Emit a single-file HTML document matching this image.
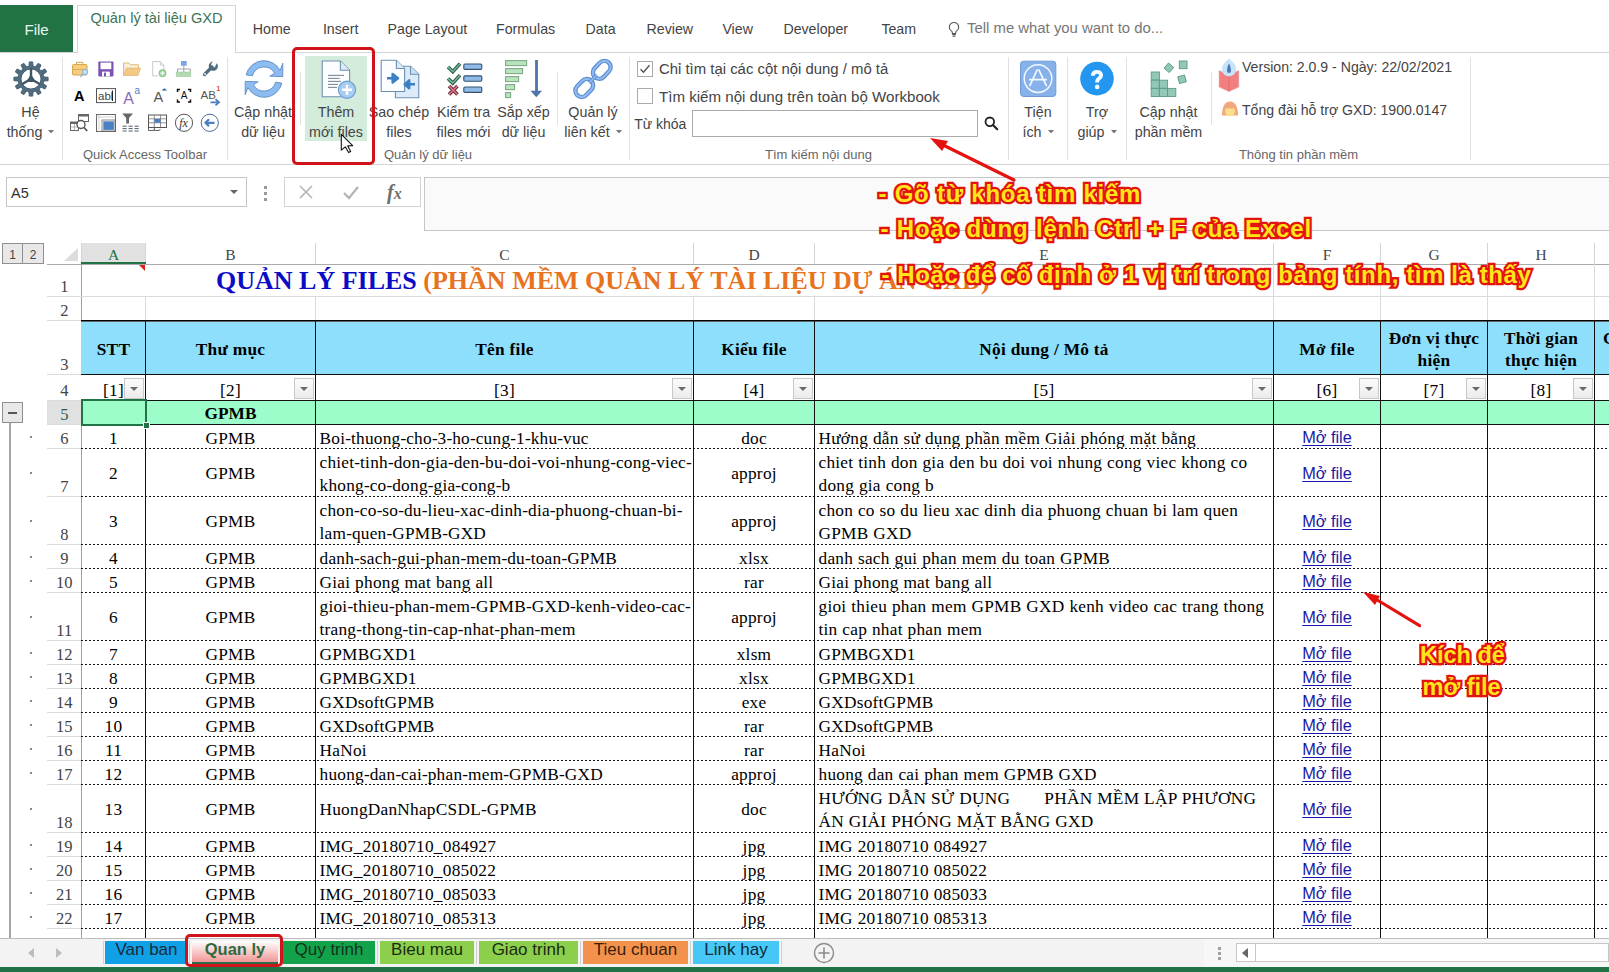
<!DOCTYPE html><html><head><meta charset="utf-8"><title>Excel</title><style>
*{margin:0;padding:0}
html,body{width:1609px;height:972px;overflow:hidden;background:#fff;position:relative}
.a{position:absolute}
.t{white-space:pre;font-family:"Liberation Sans",sans-serif}
.dd{font-size:9px;color:#666;vertical-align:2px}
svg.a{overflow:visible}
</style></head><body><div class="a" style="left:0px;top:5px;width:73px;height:47px;background:#217346"></div>
<div class="a t" style="top:21.80px;font-size:15px;line-height:15px;color:#e9f7ee;font-family:'Liberation Sans', sans-serif;left:24.50px;">File</div>
<div class="a" style="left:0px;top:52px;width:1609px;height:1px;background:#d5d5d5"></div>
<div class="a" style="left:77px;top:5px;width:159px;height:48px;background:#fff;border:1px solid #d5d5d5;border-bottom:none;box-sizing:border-box"></div>
<div class="a t" style="top:11.34px;font-size:14.6px;line-height:14.6px;color:#3a7456;font-family:'Liberation Sans', sans-serif;left:90.40px;">Quản lý tài liệu GXD</div>
<div class="a t" style="top:21.58px;font-size:14.2px;line-height:14.2px;color:#444;font-family:'Liberation Sans', sans-serif;left:252.80px;">Home</div>
<div class="a t" style="top:21.58px;font-size:14.2px;line-height:14.2px;color:#444;font-family:'Liberation Sans', sans-serif;left:322.90px;">Insert</div>
<div class="a t" style="top:21.58px;font-size:14.2px;line-height:14.2px;color:#444;font-family:'Liberation Sans', sans-serif;left:387.60px;">Page Layout</div>
<div class="a t" style="top:21.58px;font-size:14.2px;line-height:14.2px;color:#444;font-family:'Liberation Sans', sans-serif;left:496.00px;">Formulas</div>
<div class="a t" style="top:21.58px;font-size:14.2px;line-height:14.2px;color:#444;font-family:'Liberation Sans', sans-serif;left:585.60px;">Data</div>
<div class="a t" style="top:21.58px;font-size:14.2px;line-height:14.2px;color:#444;font-family:'Liberation Sans', sans-serif;left:646.60px;">Review</div>
<div class="a t" style="top:21.58px;font-size:14.2px;line-height:14.2px;color:#444;font-family:'Liberation Sans', sans-serif;left:722.40px;">View</div>
<div class="a t" style="top:21.58px;font-size:14.2px;line-height:14.2px;color:#444;font-family:'Liberation Sans', sans-serif;left:783.40px;">Developer</div>
<div class="a t" style="top:21.58px;font-size:14.2px;line-height:14.2px;color:#444;font-family:'Liberation Sans', sans-serif;left:881.40px;">Team</div>
<svg class="a" style="left:948px;top:21px;" width="12" height="17" viewBox="0 0 12 17"><path d="M6 1.5a4.6 4.6 0 0 0-2.6 8.4c.6.5.9 1 .9 1.7v.9h3.4v-.9c0-.7.3-1.2.9-1.7A4.6 4.6 0 0 0 6 1.5z" fill="none" stroke="#555" stroke-width="1.1"/><path d="M4.3 13.6h3.4M4.6 15.2h2.8" stroke="#555" stroke-width="1.1"/></svg>
<div class="a t" style="top:20.99px;font-size:14.9px;line-height:14.9px;color:#777;font-family:'Liberation Sans', sans-serif;left:967.00px;">Tell me what you want to do...</div>
<div class="a" style="left:0px;top:164px;width:1609px;height:1px;background:#d5d5d5"></div>
<div class="a" style="left:62px;top:57px;width:1px;height:103px;background:#e1e1e1"></div>
<div class="a" style="left:227px;top:57px;width:1px;height:103px;background:#e1e1e1"></div>
<div class="a" style="left:629px;top:57px;width:1px;height:103px;background:#e1e1e1"></div>
<div class="a" style="left:1008px;top:57px;width:1px;height:103px;background:#e1e1e1"></div>
<div class="a" style="left:1067px;top:57px;width:1px;height:103px;background:#e1e1e1"></div>
<div class="a" style="left:1126px;top:57px;width:1px;height:103px;background:#e1e1e1"></div>
<div class="a" style="left:1470px;top:57px;width:1px;height:103px;background:#e1e1e1"></div>
<div class="a" style="left:300px;top:72px;width:1px;height:53px;background:#e1e1e1"></div>
<div class="a" style="left:557px;top:72px;width:1px;height:53px;background:#e1e1e1"></div>
<div class="a" style="left:1211px;top:72px;width:1px;height:53px;background:#e1e1e1"></div>
<div class="a t" style="top:148.00px;font-size:13px;line-height:13px;color:#666;font-family:'Liberation Sans', sans-serif;left:-155.00px;width:600px;text-align:center;">Quick Access Toolbar</div>
<div class="a t" style="top:148.00px;font-size:13px;line-height:13px;color:#666;font-family:'Liberation Sans', sans-serif;left:128.00px;width:600px;text-align:center;">Quản lý dữ liệu</div>
<div class="a t" style="top:148.00px;font-size:13px;line-height:13px;color:#666;font-family:'Liberation Sans', sans-serif;left:518.50px;width:600px;text-align:center;">Tìm kiếm nội dung</div>
<div class="a t" style="top:148.00px;font-size:13px;line-height:13px;color:#666;font-family:'Liberation Sans', sans-serif;left:998.50px;width:600px;text-align:center;">Thông tin phần mềm</div>
<div class="a t" style="top:104.90px;font-size:14.3px;line-height:14.3px;color:#444;font-family:'Liberation Sans', sans-serif;left:-29.50px;width:120px;text-align:center;">Hệ</div>
<div class="a t" style="top:124.90px;font-size:14.3px;line-height:14.3px;color:#444;font-family:'Liberation Sans', sans-serif;left:-29.50px;width:120px;text-align:center;">thống <svg width="6" height="3.5" style="vertical-align:3.5px;margin-left:2px"><path d="M0 0h6l-3 3.5z" fill="#777"/></svg></div>
<div class="a t" style="top:104.90px;font-size:14.3px;line-height:14.3px;color:#444;font-family:'Liberation Sans', sans-serif;left:203.00px;width:120px;text-align:center;">Cập nhật</div>
<div class="a t" style="top:124.90px;font-size:14.3px;line-height:14.3px;color:#444;font-family:'Liberation Sans', sans-serif;left:203.00px;width:120px;text-align:center;">dữ liệu</div>
<div class="a" style="left:305px;top:56px;width:62px;height:85px;background:#d3ecdc"></div>
<div class="a t" style="top:104.90px;font-size:14.3px;line-height:14.3px;color:#444;font-family:'Liberation Sans', sans-serif;left:276.00px;width:120px;text-align:center;">Thêm</div>
<div class="a t" style="top:124.90px;font-size:14.3px;line-height:14.3px;color:#444;font-family:'Liberation Sans', sans-serif;left:276.00px;width:120px;text-align:center;">mới files</div>
<div class="a t" style="top:104.90px;font-size:14.3px;line-height:14.3px;color:#444;font-family:'Liberation Sans', sans-serif;left:339.00px;width:120px;text-align:center;">Sao chép</div>
<div class="a t" style="top:124.90px;font-size:14.3px;line-height:14.3px;color:#444;font-family:'Liberation Sans', sans-serif;left:339.00px;width:120px;text-align:center;">files</div>
<div class="a t" style="top:104.90px;font-size:14.3px;line-height:14.3px;color:#444;font-family:'Liberation Sans', sans-serif;left:403.50px;width:120px;text-align:center;">Kiểm tra</div>
<div class="a t" style="top:124.90px;font-size:14.3px;line-height:14.3px;color:#444;font-family:'Liberation Sans', sans-serif;left:403.50px;width:120px;text-align:center;">files mới</div>
<div class="a t" style="top:104.90px;font-size:14.3px;line-height:14.3px;color:#444;font-family:'Liberation Sans', sans-serif;left:463.50px;width:120px;text-align:center;">Sắp xếp</div>
<div class="a t" style="top:124.90px;font-size:14.3px;line-height:14.3px;color:#444;font-family:'Liberation Sans', sans-serif;left:463.50px;width:120px;text-align:center;">dữ liệu</div>
<div class="a t" style="top:104.90px;font-size:14.3px;line-height:14.3px;color:#444;font-family:'Liberation Sans', sans-serif;left:533.00px;width:120px;text-align:center;">Quản lý</div>
<div class="a t" style="top:124.90px;font-size:14.3px;line-height:14.3px;color:#444;font-family:'Liberation Sans', sans-serif;left:533.00px;width:120px;text-align:center;">liên kết <svg width="6" height="3.5" style="vertical-align:3.5px;margin-left:2px"><path d="M0 0h6l-3 3.5z" fill="#777"/></svg></div>
<div class="a t" style="top:104.90px;font-size:14.3px;line-height:14.3px;color:#444;font-family:'Liberation Sans', sans-serif;left:978.00px;width:120px;text-align:center;">Tiện</div>
<div class="a t" style="top:124.90px;font-size:14.3px;line-height:14.3px;color:#444;font-family:'Liberation Sans', sans-serif;left:978.00px;width:120px;text-align:center;">ích <svg width="6" height="3.5" style="vertical-align:3.5px;margin-left:2px"><path d="M0 0h6l-3 3.5z" fill="#777"/></svg></div>
<div class="a t" style="top:104.90px;font-size:14.3px;line-height:14.3px;color:#444;font-family:'Liberation Sans', sans-serif;left:1037.00px;width:120px;text-align:center;">Trợ</div>
<div class="a t" style="top:124.90px;font-size:14.3px;line-height:14.3px;color:#444;font-family:'Liberation Sans', sans-serif;left:1037.00px;width:120px;text-align:center;">giúp <svg width="6" height="3.5" style="vertical-align:3.5px;margin-left:2px"><path d="M0 0h6l-3 3.5z" fill="#777"/></svg></div>
<div class="a t" style="top:104.90px;font-size:14.3px;line-height:14.3px;color:#444;font-family:'Liberation Sans', sans-serif;left:1108.50px;width:120px;text-align:center;">Cập nhật</div>
<div class="a t" style="top:124.90px;font-size:14.3px;line-height:14.3px;color:#444;font-family:'Liberation Sans', sans-serif;left:1108.50px;width:120px;text-align:center;">phần mềm</div>
<div class="a" style="left:637px;top:61px;width:16px;height:16px;border:1px solid #ababab;box-sizing:border-box;background:#fff"></div>
<svg class="a" style="left:637px;top:61px;" width="16" height="16" viewBox="0 0 16 16"><path d="M3.5 8.2l3 3 6-7" fill="none" stroke="#555" stroke-width="1.4"/></svg>
<div class="a t" style="top:61.89px;font-size:14.9px;line-height:14.9px;color:#444;font-family:'Liberation Sans', sans-serif;left:659.00px;">Chỉ tìm tại các cột nội dung / mô tả</div>
<div class="a" style="left:637px;top:88px;width:16px;height:16px;border:1px solid #ababab;box-sizing:border-box;background:#fff"></div>
<div class="a t" style="top:88.72px;font-size:15.1px;line-height:15.1px;color:#444;font-family:'Liberation Sans', sans-serif;left:659.00px;">Tìm kiếm nội dung trên toàn bộ Workbook</div>
<div class="a t" style="top:117.15px;font-size:14px;line-height:14px;color:#444;font-family:'Liberation Sans', sans-serif;left:634.20px;">Từ khóa</div>
<div class="a" style="left:692px;top:110px;width:286px;height:27px;border:1px solid #ababab;box-sizing:border-box;background:#fff"></div>
<svg class="a" style="left:984px;top:116px;" width="15" height="15" viewBox="0 0 15 15"><circle cx="5.8" cy="5.8" r="4.3" fill="none" stroke="#222" stroke-width="1.8"/><path d="M9 9l4.2 4.2" stroke="#222" stroke-width="2.2" stroke-linecap="round"/></svg>
<div class="a t" style="top:60.06px;font-size:14.1px;line-height:14.1px;color:#444;font-family:'Liberation Sans', sans-serif;left:1242.00px;">Version: 2.0.9 - Ngày: 22/02/2021</div>
<div class="a t" style="top:103.06px;font-size:14.1px;line-height:14.1px;color:#444;font-family:'Liberation Sans', sans-serif;left:1242.00px;">Tổng đài hỗ trợ GXD: 1900.0147</div>
<svg class="a" style="left:0px;top:0px;" width="1609" height="200" viewBox="0 0 1609 200"><path d="M28.93 66.17 L29.28 61.89 L32.72 61.89 L33.07 66.17 L35.62 66.85 L38.07 63.32 L41.04 65.04 L39.21 68.92 L41.08 70.79 L44.96 68.96 L46.68 71.93 L43.15 74.38 L43.83 76.93 L48.11 77.28 L48.11 80.72 L43.83 81.07 L43.15 83.62 L46.68 86.07 L44.96 89.04 L41.08 87.21 L39.21 89.08 L41.04 92.96 L38.07 94.68 L35.62 91.15 L33.07 91.83 L32.72 96.11 L29.28 96.11 L28.93 91.83 L26.38 91.15 L23.93 94.68 L20.96 92.96 L22.79 89.08 L20.92 87.21 L17.04 89.04 L15.32 86.07 L18.85 83.62 L18.17 81.07 L13.89 80.72 L13.89 77.28 L18.17 76.93 L18.85 74.38 L15.32 71.93 L17.04 68.96 L20.92 70.79 L22.79 68.92 L20.96 65.04 L23.93 63.32 L26.38 66.85Z M41.0 79 A10.0 10.0 0 1 0 21.0 79 A10.0 10.0 0 1 0 41.0 79Z" fill="#4f6c80" fill-rule="evenodd" stroke="#425b6c" stroke-width="0.9" stroke-linejoin="round"/><path d="M31 79 L31.00 68.40" stroke="#3f5666" stroke-width="2.4"/><path d="M31 79 L40.18 84.30" stroke="#3f5666" stroke-width="2.4"/><path d="M31 79 L21.82 84.30" stroke="#3f5666" stroke-width="2.4"/><path d="M31 75.4 L34.6 81.4 L27.4 81.4Z" fill="#3f5666" stroke="#3f5666" stroke-width="1.4" stroke-linejoin="round"/></svg>
<svg class="a" style="left:0px;top:0px;" width="1609" height="200" viewBox="0 0 1609 200"><rect x="72.5" y="64.5" width="14.5" height="10.5" rx="1" fill="#f6cc7e" stroke="#d9a54e" stroke-width="1"/><path d="M76.5 64.5v-2.2h6.5v2.2" fill="none" stroke="#d9a54e" stroke-width="1"/><path d="M72.5 69.5h14.5" stroke="#d9a54e" stroke-width="0.8"/><circle cx="85" cy="72" r="2.6" fill="#c7e2f8" stroke="#86b3de" stroke-width="1"/><path d="M83.2 74l-2.8 2.8" stroke="#86b3de" stroke-width="1.3"/><rect x="98.3" y="61.4" width="15.2" height="15" rx="0.8" fill="#7c52b3"/><rect x="100.5" y="62.6" width="10.8" height="6.6" fill="#fff"/><rect x="102" y="71.6" width="7.8" height="4.8" fill="#fff"/><rect x="104" y="72.6" width="2" height="3.8" fill="#7c52b3"/><path d="M123.6 75.5V63h5.2l1.6 1.8h8v3" fill="#fbf0dc" stroke="#e0b877" stroke-width="1"/><path d="M123.6 75.5l2.8-7.4h14.2l-2.6 7.4z" fill="#f3c985" stroke="#e0b877" stroke-width="0.8"/><path d="M152.7 61.6h7.6l3.6 3.6v5.5M158 75.9h-5.3V61.6" fill="#fff" stroke="#c9c9c9" stroke-width="1"/><path d="M160.3 61.6v3.6h3.6" fill="none" stroke="#c9c9c9" stroke-width="0.9"/><circle cx="162.5" cy="73.2" r="3.6" fill="#9ed49e" stroke="#7fbf7f" stroke-width="0.8"/><path d="M162.5 71.2v4M160.5 73.2h4" stroke="#fff" stroke-width="1.2"/><rect x="181" y="61" width="5.7" height="4.8" fill="#7aa6e6"/><path d="M183.8 65.8v3M177.5 72v-3h12.8v3M183.8 69v3" fill="none" stroke="#999" stroke-width="0.9"/><rect x="176.2" y="72" width="4.4" height="4.6" fill="#b5dcb5" stroke="#9cc99c" stroke-width="0.6"/><rect x="181.3" y="72" width="4.4" height="4.6" fill="#b5dcb5" stroke="#9cc99c" stroke-width="0.6"/><rect x="186.4" y="72" width="4.4" height="4.6" fill="#b5dcb5" stroke="#9cc99c" stroke-width="0.6"/><path d="M204.5 74.5l7.5-7.5" stroke="#4f6b80" stroke-width="3.2" stroke-linecap="round"/><path d="M216.8 63.2a4.6 4.6 0 1 1-3.8-1.6l-2 2.4 1.1 2.6 2.6 1z" fill="#4f6b80"/><circle cx="205" cy="74" r="0.9" fill="#fff"/><text x="79.3" y="101" font-family="Liberation Sans" font-weight="700" font-size="14.5" text-anchor="middle" fill="#000">A</text><rect x="96.5" y="88.6" width="19" height="14" fill="#fff" stroke="#555" stroke-width="1"/><text x="98" y="100" font-family="Liberation Sans" font-size="11.5" fill="#444">abl</text><path d="M112.4 90.5v10.5" stroke="#111" stroke-width="1"/><text x="128.7" y="103.5" font-family="Liberation Sans" font-size="16" text-anchor="middle" fill="#8a6bb5">A</text><text x="137.2" y="94.3" font-family="Liberation Sans" font-size="10" text-anchor="middle" fill="#4a7fc1">a</text><text x="158.3" y="101.7" font-family="Liberation Sans" font-size="14.5" text-anchor="middle" fill="#555">A</text><path d="M161.5 90.5l2.8-2.2 2.8 2.2z" fill="#3a5f8f"/><path d="M177.5 92v-2.5h2.5M188 89.5h2.5V92M190.5 99.5v2.5H188M180 102h-2.5v-2.5" fill="none" stroke="#111" stroke-width="1.5"/><text x="184" y="99.3" font-family="Liberation Sans" font-size="10" text-anchor="middle" fill="#111">A</text><text x="208.2" y="99" font-family="Liberation Sans" font-size="11.5" text-anchor="middle" fill="#555">AB</text><text x="218.3" y="91" font-family="Liberation Sans" font-weight="700" font-size="6.5" text-anchor="middle" fill="#d04a2a">1</text><path d="M210.5 102.3h7.5M215.5 99.2l3.5 3.1-3.5 3.1" fill="none" stroke="#4a7fc1" stroke-width="1.8"/><rect x="78.5" y="114.5" width="10" height="7" fill="#fff" stroke="#666" stroke-width="1"/><rect x="78.5" y="114.5" width="10" height="2" fill="#666"/><rect x="70.5" y="122" width="8" height="8.5" fill="#fff" stroke="#666" stroke-width="1"/><rect x="70.5" y="122" width="8" height="2" fill="#666"/><path d="M74.5 124v6.5M70.5 127h8" stroke="#888" stroke-width="0.6"/><circle cx="81" cy="124.5" r="4" fill="#fff" stroke="#555" stroke-width="1.4"/><path d="M84 127.5l3.2 3.5" stroke="#555" stroke-width="1.8"/><rect x="96.5" y="114.5" width="19" height="17" fill="#fff" stroke="#666" stroke-width="1"/><path d="M96.5 117h19M99 114.5v17" stroke="#c8c8c8" stroke-width="0.8"/><path d="M102.5 117.5h12.5M104 116.5v14" stroke="#ddd" stroke-width="0"/><rect x="102" y="120" width="13" height="11" fill="#fff" stroke="#666" stroke-width="0.8"/><rect x="103.3" y="121.3" width="10.6" height="8.6" fill="#4a80c4"/><path d="M122.2 113.5h10.8l-4 4.4v5.6h-2.8v-5.6z" fill="#666"/><path d="M122.5 126.2h4.2M128.5 126.2h4.2M134.5 126.2h4.2M122.5 128.6h4.2M128.5 128.6h4.2M134.5 128.6h4.2M122.5 131h4.2M128.5 131h4.2M134.5 131h4.2" stroke="#4f5f6e" stroke-width="1"/><rect x="148.5" y="115" width="18" height="12.5" fill="#fff" stroke="#555" stroke-width="1"/><path d="M148.5 118.8h18M148.5 122.8h18M154.3 115v12.5M160.5 115v12.5" stroke="#666" stroke-width="0.7"/><rect x="154.5" y="119" width="6" height="3.6" fill="#4a7fc1"/><path d="M148.5 127.5v3h5l1-1.5M154.3 127.5v3h5l1-1.5" fill="none" stroke="#555" stroke-width="0.9"/><circle cx="184" cy="122.8" r="8.6" fill="#fff" stroke="#555" stroke-width="1"/><text x="183.5" y="127" font-family="Liberation Serif" font-style="italic" font-size="12" text-anchor="middle" fill="#333">fx</text><circle cx="209.8" cy="122.8" r="8.6" fill="#fff" stroke="#4a6f9e" stroke-width="1"/><path d="M214.5 122.8h-8M209 119.3l-3.5 3.5 3.5 3.5" fill="none" stroke="#4a7fc1" stroke-width="2.2"/></svg>
<svg class="a" style="left:244px;top:59px;" width="40" height="40" viewBox="0 0 40 40"><path d="M2.17 15.88 A18.3 18.3 0 0 1 36.16 11.41 L38.8 4.2 L38.8 17.6 L25.8 17.2 L30.60 14.37 A12.0 12.0 0 0 0 8.46 16.69 Z" fill="#8dbcf0" stroke="#5e8bc4" stroke-width="0.9" stroke-linejoin="round"/><path d="M2.17 15.88 A18.3 18.3 0 0 1 36.16 11.41 L38.8 4.2 L38.8 17.6 L25.8 17.2 L30.60 14.37 A12.0 12.0 0 0 0 8.46 16.69 Z" fill="#8dbcf0" stroke="#5e8bc4" stroke-width="0.9" stroke-linejoin="round" transform="rotate(180 20 20)"/></svg>
<svg class="a" style="left:316px;top:56px;" width="46" height="46" viewBox="0 0 46 46"><path d="M6.2 5H24.4L33.6 14.2V40.7H6.2Z" fill="#fbfdff" stroke="#6f8fb0" stroke-width="1.1"/><path d="M24.4 5V14.2H33.6" fill="#dcebfa" stroke="#6f8fb0" stroke-width="1.1"/><path d="M12 19.4h16" stroke="#7f8c99" stroke-width="1.1"/><path d="M12 22.4h11.6" stroke="#7f8c99" stroke-width="1.1"/><path d="M12 25.4h13" stroke="#7f8c99" stroke-width="1.1"/><path d="M12 28.4h10" stroke="#7f8c99" stroke-width="1.1"/><path d="M12 31.4h9" stroke="#7f8c99" stroke-width="1.1"/><circle cx="31" cy="33.8" r="8.6" fill="#a8cdf3" stroke="#6b9dd1" stroke-width="1.2"/><path d="M31 28.8v10M26 33.8h10" stroke="#fff" stroke-width="2.4"/></svg>
<svg class="a" style="left:376px;top:56px;" width="48" height="46" viewBox="0 0 48 46"><path d="M19.4 10.2H34.5L42.8 18.3V41.7H19.4Z" fill="#dcebfa" stroke="#6f8fb0" stroke-width="1.1"/><path d="M34.5 10.2V18.3H42.8" fill="#c9e0f7" stroke="#6f8fb0" stroke-width="1.1"/><path d="M5.2 4.3H20.4L28.6 12.5V35.5H5.2Z" fill="#fbfdff" stroke="#6f8fb0" stroke-width="1.1"/><path d="M20.4 4.3V12.5H28.6" fill="#dcebfa" stroke="#6f8fb0" stroke-width="1.1"/><path d="M11 22.3h7M16.6 18l5.4 4.3-5.4 4.3z" fill="#3c7fc4" stroke="#3c7fc4" stroke-width="2.4" stroke-linejoin="round"/><path d="M39 28.3h-7M33.2 24.3l-4.6 4-0 0 4.6 4z" fill="#3c7fc4" stroke="#3c7fc4" stroke-width="2.4" stroke-linejoin="round"/></svg>
<svg class="a" style="left:442px;top:56px;" width="48" height="46" viewBox="0 0 48 46"><path d="M6 11l4.8 4.6 7.2-8" fill="none" stroke="#2f5d46" stroke-width="3.6" stroke-linejoin="miter"/><path d="M6 11l4.8 4.6 7.2-8" fill="none" stroke="#74c4a0" stroke-width="1.4" stroke-linejoin="miter"/><path d="M6 22.5l4.8 4.6 7.2-8" fill="none" stroke="#2f5d46" stroke-width="3.6" stroke-linejoin="miter"/><path d="M6 22.5l4.8 4.6 7.2-8" fill="none" stroke="#74c4a0" stroke-width="1.4" stroke-linejoin="miter"/><path d="M7 30l8.5 8.5M15.5 30L7 38.5" stroke="#6b2f3d" stroke-width="3.6"/><path d="M7 30l8.5 8.5M15.5 30L7 38.5" stroke="#e8798a" stroke-width="1.4"/><rect x="21.8" y="8" width="18" height="5.4" rx="1.2" fill="#8fbbe9" stroke="#34506e" stroke-width="1.1"/><rect x="21.8" y="19.9" width="18" height="5.4" rx="1.2" fill="#8fbbe9" stroke="#34506e" stroke-width="1.1"/><rect x="21.8" y="31" width="18" height="5.4" rx="1.2" fill="#8fbbe9" stroke="#34506e" stroke-width="1.1"/></svg>
<svg class="a" style="left:500px;top:56px;" width="48" height="46" viewBox="0 0 48 46"><rect x="5.6" y="4.6" width="21" height="5" fill="#b7e4bd" stroke="#7fa987" stroke-width="1.1"/><rect x="5.6" y="12.6" width="17" height="5" fill="#b7e4bd" stroke="#7fa987" stroke-width="1.1"/><rect x="5.6" y="20.6" width="13" height="5" fill="#b7e4bd" stroke="#7fa987" stroke-width="1.1"/><rect x="5.6" y="28.6" width="9" height="5" fill="#b7e4bd" stroke="#7fa987" stroke-width="1.1"/><rect x="5.6" y="36.6" width="5" height="5" fill="#b7e4bd" stroke="#7fa987" stroke-width="1.1"/><path d="M36.5 4v31" stroke="#4f74a8" stroke-width="2.8"/><path d="M30.5 34.8h11.6l-5.8 6.4z" fill="#4f74a8"/></svg>
<svg class="a" style="left:568px;top:56px;" width="48" height="46" viewBox="0 0 48 46"><g transform="translate(25 22.9) rotate(-46)"><rect x="2.6" y="-6.3" width="20" height="12.6" rx="6.3" fill="none" stroke="#5d8fd4" stroke-width="4.4"/><rect x="2.6" y="-6.3" width="20" height="12.6" rx="6.3" fill="none" stroke="#93bbef" stroke-width="2"/><rect x="-22.6" y="-6.3" width="20" height="12.6" rx="6.3" fill="none" stroke="#5d8fd4" stroke-width="4.4"/><rect x="-22.6" y="-6.3" width="20" height="12.6" rx="6.3" fill="none" stroke="#93bbef" stroke-width="2"/><path d="M-5.5 0h11" stroke="#5d8fd4" stroke-width="3.6"/><path d="M-5.5 0h11" stroke="#93bbef" stroke-width="1.5"/></g></svg>
<svg class="a" style="left:1016px;top:56px;" width="44" height="44" viewBox="0 0 44 44"><rect x="4.5" y="5.2" width="35.3" height="35.3" rx="3" fill="#86b1ea" stroke="#719bd6" stroke-width="1"/><circle cx="22" cy="22.6" r="13.8" fill="none" stroke="#f2f8ff" stroke-width="1.5"/><path d="M21.4 13.3L13.6 30.2M22.6 13.3L30.6 30.2M13 23.6h18" stroke="#f2f8ff" stroke-width="1.7"/></svg>
<svg class="a" style="left:1080px;top:62px;" width="34" height="34" viewBox="0 0 34 34"><circle cx="17" cy="16.6" r="16.8" fill="#2396ef"/><path d="M12.9 13.8C12.9 11.1 14.7 9.9 17 9.9C19.3 9.9 21.1 11.3 21.1 13.4C21.1 15.9 17.2 16.6 17.2 19.3V20.6" fill="none" stroke="#f4fbff" stroke-width="3.9"/><circle cx="17.2" cy="24.9" r="2.3" fill="#f4fbff"/></svg>
<svg class="a" style="left:1146px;top:56px;" width="46" height="46" viewBox="0 0 46 46"><rect x="5.2" y="16" width="8.2" height="8.1" fill="#93c7b7" stroke="#5b9b89" stroke-width="0.9"/><rect x="5.2" y="24.2" width="8.2" height="8.1" fill="#93c7b7" stroke="#5b9b89" stroke-width="0.9"/><rect x="13.4" y="24.2" width="8.2" height="8.1" fill="#93c7b7" stroke="#5b9b89" stroke-width="0.9"/><rect x="5.2" y="32.4" width="8.2" height="8.1" fill="#93c7b7" stroke="#5b9b89" stroke-width="0.9"/><rect x="13.4" y="32.4" width="8.2" height="8.1" fill="#93c7b7" stroke="#5b9b89" stroke-width="0.9"/><rect x="21.6" y="32.4" width="8.2" height="8.1" fill="#93c7b7" stroke="#5b9b89" stroke-width="0.9"/><rect x="-3.4" y="-3.4" width="6.8" height="6.8" fill="#93c7b7" stroke="#5b9b89" stroke-width="0.9" transform="translate(22.9 11.8) rotate(40)"/><rect x="33.3" y="5" width="7.7" height="7.7" fill="#93c7b7" stroke="#5b9b89" stroke-width="0.9"/><rect x="-3.5" y="-3.5" width="7" height="7" fill="#93c7b7" stroke="#5b9b89" stroke-width="0.9" transform="translate(36 23.3) rotate(-15)"/></svg>
<svg class="a" style="left:1212px;top:54px;" width="34" height="70" viewBox="0 0 34 70"><path d="M7.1 16.5L17 21L26.8 16.5V33L17 37.5L7.1 33Z" fill="#f27f80" stroke="#e8a0a0" stroke-width="0.6"/><path d="M17 21V37.5" stroke="#e26464" stroke-width="0.8"/><path d="M17 4.6C20.8 7.6 24.2 11.5 24.2 15.2A7.2 7.2 0 0 1 9.8 15.2C9.8 11.5 13.2 7.6 17 4.6Z" fill="#c7e3f9"/><path d="M17 9.5C18.3 12 19 14.5 19 16.5A2 2.6 0 0 1 15 16.5C15 14.5 15.7 12 17 9.5Z" fill="#4d78b8"/></svg>
<svg class="a" style="left:1212px;top:54px;" width="34" height="70" viewBox="0 0 34 70"><path d="M10 61.5c0-8 2.5-14 8-14s8 6 8 14z" fill="#f2a77c"/><ellipse cx="18" cy="57" rx="5" ry="5.2" fill="#fae08a"/><path d="M12.5 54.5c2-4 9-4 11 0" fill="#f2a77c"/></svg>
<svg class="a" style="left:0px;top:0px;" width="1609" height="200" viewBox="0 0 1609 200"><path d="M341.3 134.4V150.2L345.3 146.8L348.6 152.6L350.7 151.5L347.7 145.9L352.7 145.7Z" fill="#fff" stroke="#111" stroke-width="1.1" stroke-linejoin="round"/></svg>
<div class="a" style="left:292px;top:47px;width:83px;height:118px;border:3px solid #d0121b;border-radius:5px;box-sizing:border-box"></div>
<div class="a" style="left:6px;top:177px;width:241px;height:30px;border:1px solid #c6c6c6;box-sizing:border-box;background:#fff"></div>
<div class="a t" style="top:185.73px;font-size:14.5px;line-height:14.5px;color:#333;font-family:'Liberation Sans', sans-serif;left:11.00px;">A5</div>
<svg class="a" style="left:230px;top:190px;" width="8" height="4" viewBox="0 0 8 4"><path d="M0 0h8l-4 4z" fill="#666"/></svg>
<div class="a" style="left:264px;top:186px;width:3px;height:3px;background:#999"></div>
<div class="a" style="left:264px;top:192px;width:3px;height:3px;background:#999"></div>
<div class="a" style="left:264px;top:198px;width:3px;height:3px;background:#999"></div>
<div class="a" style="left:284px;top:177px;width:137px;height:30px;border:1px solid #d2d2d2;box-sizing:border-box;background:#fff"></div>
<svg class="a" style="left:299px;top:185px;" width="14" height="14" viewBox="0 0 14 14"><path d="M1 1l12 12M13 1L1 13" stroke="#b4b4b4" stroke-width="1.6"/></svg>
<svg class="a" style="left:343px;top:185px;" width="16" height="15" viewBox="0 0 16 15"><path d="M1 8l5 5L15 2" fill="none" stroke="#b4b4b4" stroke-width="2.2"/></svg>
<div class="a t" style="top:181.75px;font-size:20px;line-height:20px;color:#6e6e6e;font-family:'Liberation Serif', serif;font-weight:700;left:387.00px;"><i>f</i><i style="font-size:16px">x</i></div>
<div class="a" style="left:424px;top:177px;width:1200px;height:54px;border:1px solid #c6c6c6;box-sizing:border-box;background:#fafafa"></div>
<div class="a" style="left:47px;top:243px;width:1562px;height:21px;background:#fff"></div>
<div class="a" style="left:81px;top:243px;width:65px;height:21px;background:#e1e1e1"></div>
<div class="a t" style="top:246.52px;font-size:15.5px;line-height:15.5px;color:#217346;font-family:'Liberation Serif', serif;left:83.50px;width:60px;text-align:center;">A</div>
<div class="a t" style="top:246.52px;font-size:15.5px;line-height:15.5px;color:#444;font-family:'Liberation Serif', serif;left:200.50px;width:60px;text-align:center;">B</div>
<div class="a t" style="top:246.52px;font-size:15.5px;line-height:15.5px;color:#444;font-family:'Liberation Serif', serif;left:474.50px;width:60px;text-align:center;">C</div>
<div class="a t" style="top:246.52px;font-size:15.5px;line-height:15.5px;color:#444;font-family:'Liberation Serif', serif;left:724.00px;width:60px;text-align:center;">D</div>
<div class="a t" style="top:246.52px;font-size:15.5px;line-height:15.5px;color:#444;font-family:'Liberation Serif', serif;left:1014.00px;width:60px;text-align:center;">E</div>
<div class="a t" style="top:246.52px;font-size:15.5px;line-height:15.5px;color:#444;font-family:'Liberation Serif', serif;left:1297.00px;width:60px;text-align:center;">F</div>
<div class="a t" style="top:246.52px;font-size:15.5px;line-height:15.5px;color:#444;font-family:'Liberation Serif', serif;left:1404.00px;width:60px;text-align:center;">G</div>
<div class="a t" style="top:246.52px;font-size:15.5px;line-height:15.5px;color:#444;font-family:'Liberation Serif', serif;left:1511.00px;width:60px;text-align:center;">H</div>
<div class="a t" style="top:246.52px;font-size:15.5px;line-height:15.5px;color:#444;font-family:'Liberation Serif', serif;left:1618.00px;width:60px;text-align:center;">I</div>
<div class="a" style="left:81px;top:243px;width:1px;height:21px;background:#d5d5d5"></div>
<div class="a" style="left:145px;top:243px;width:1px;height:21px;background:#d5d5d5"></div>
<div class="a" style="left:315px;top:243px;width:1px;height:21px;background:#d5d5d5"></div>
<div class="a" style="left:693px;top:243px;width:1px;height:21px;background:#d5d5d5"></div>
<div class="a" style="left:814px;top:243px;width:1px;height:21px;background:#d5d5d5"></div>
<div class="a" style="left:1273px;top:243px;width:1px;height:21px;background:#d5d5d5"></div>
<div class="a" style="left:1380px;top:243px;width:1px;height:21px;background:#d5d5d5"></div>
<div class="a" style="left:1487px;top:243px;width:1px;height:21px;background:#d5d5d5"></div>
<div class="a" style="left:1594px;top:243px;width:1px;height:21px;background:#d5d5d5"></div>
<div class="a" style="left:47px;top:264px;width:1562px;height:1px;background:#ababab"></div>
<div class="a" style="left:81px;top:262px;width:65px;height:2px;background:#217346"></div>
<svg class="a" style="left:139px;top:265px;" width="6" height="6" viewBox="0 0 6 6"><path d="M0 0h6v6z" fill="#e0201a"/></svg>
<svg class="a" style="left:64px;top:248px;" width="14" height="13" viewBox="0 0 14 13"><path d="M14 0v13H0z" fill="#dcdcdc"/></svg>
<div class="a" style="left:2px;top:243px;width:21px;height:21px;background:#e8e8e8;border:1px solid #8f8f8f;box-sizing:border-box"></div>
<div class="a" style="left:22px;top:243px;width:22px;height:21px;background:#e8e8e8;border:1px solid #8f8f8f;box-sizing:border-box"></div>
<div class="a t" style="top:248.84px;font-size:12px;line-height:12px;color:#444;font-family:'Liberation Sans', sans-serif;left:2.50px;width:20px;text-align:center;">1</div>
<div class="a t" style="top:248.84px;font-size:12px;line-height:12px;color:#444;font-family:'Liberation Sans', sans-serif;left:23.00px;width:20px;text-align:center;">2</div>
<div class="a" style="left:81px;top:264px;width:1px;height:674px;background:#9f9f9f"></div>
<div class="a" style="left:47px;top:400px;width:34px;height:24px;background:#e1e1e1"></div>
<div class="a" style="left:47px;top:296px;width:34px;height:1px;background:#dcdcdc"></div>
<div class="a t" style="top:278.68px;font-size:16.5px;line-height:16.5px;color:#444;font-family:'Liberation Serif', serif;left:47.25px;width:34px;text-align:center;">1</div>
<div class="a" style="left:47px;top:320px;width:34px;height:1px;background:#dcdcdc"></div>
<div class="a t" style="top:302.68px;font-size:16.5px;line-height:16.5px;color:#444;font-family:'Liberation Serif', serif;left:47.25px;width:34px;text-align:center;">2</div>
<div class="a" style="left:47px;top:374px;width:34px;height:1px;background:#dcdcdc"></div>
<div class="a t" style="top:356.68px;font-size:16.5px;line-height:16.5px;color:#444;font-family:'Liberation Serif', serif;left:47.25px;width:34px;text-align:center;">3</div>
<div class="a" style="left:47px;top:400px;width:34px;height:1px;background:#dcdcdc"></div>
<div class="a t" style="top:382.68px;font-size:16.5px;line-height:16.5px;color:#444;font-family:'Liberation Serif', serif;left:47.25px;width:34px;text-align:center;">4</div>
<div class="a" style="left:47px;top:424px;width:34px;height:1px;background:#dcdcdc"></div>
<div class="a t" style="top:406.68px;font-size:16.5px;line-height:16.5px;color:#2f5a45;font-family:'Liberation Serif', serif;left:47.25px;width:34px;text-align:center;">5</div>
<div class="a" style="left:47px;top:448px;width:34px;height:1px;background:#dcdcdc"></div>
<div class="a t" style="top:430.68px;font-size:16.5px;line-height:16.5px;color:#444;font-family:'Liberation Serif', serif;left:47.25px;width:34px;text-align:center;">6</div>
<div class="a" style="left:47px;top:496px;width:34px;height:1px;background:#dcdcdc"></div>
<div class="a t" style="top:478.68px;font-size:16.5px;line-height:16.5px;color:#444;font-family:'Liberation Serif', serif;left:47.25px;width:34px;text-align:center;">7</div>
<div class="a" style="left:47px;top:544px;width:34px;height:1px;background:#dcdcdc"></div>
<div class="a t" style="top:526.68px;font-size:16.5px;line-height:16.5px;color:#444;font-family:'Liberation Serif', serif;left:47.25px;width:34px;text-align:center;">8</div>
<div class="a" style="left:47px;top:568px;width:34px;height:1px;background:#dcdcdc"></div>
<div class="a t" style="top:550.68px;font-size:16.5px;line-height:16.5px;color:#444;font-family:'Liberation Serif', serif;left:47.25px;width:34px;text-align:center;">9</div>
<div class="a" style="left:47px;top:592px;width:34px;height:1px;background:#dcdcdc"></div>
<div class="a t" style="top:574.68px;font-size:16.5px;line-height:16.5px;color:#444;font-family:'Liberation Serif', serif;left:47.25px;width:34px;text-align:center;">10</div>
<div class="a" style="left:47px;top:640px;width:34px;height:1px;background:#dcdcdc"></div>
<div class="a t" style="top:622.68px;font-size:16.5px;line-height:16.5px;color:#444;font-family:'Liberation Serif', serif;left:47.25px;width:34px;text-align:center;">11</div>
<div class="a" style="left:47px;top:664px;width:34px;height:1px;background:#dcdcdc"></div>
<div class="a t" style="top:646.68px;font-size:16.5px;line-height:16.5px;color:#444;font-family:'Liberation Serif', serif;left:47.25px;width:34px;text-align:center;">12</div>
<div class="a" style="left:47px;top:688px;width:34px;height:1px;background:#dcdcdc"></div>
<div class="a t" style="top:670.68px;font-size:16.5px;line-height:16.5px;color:#444;font-family:'Liberation Serif', serif;left:47.25px;width:34px;text-align:center;">13</div>
<div class="a" style="left:47px;top:712px;width:34px;height:1px;background:#dcdcdc"></div>
<div class="a t" style="top:694.68px;font-size:16.5px;line-height:16.5px;color:#444;font-family:'Liberation Serif', serif;left:47.25px;width:34px;text-align:center;">14</div>
<div class="a" style="left:47px;top:736px;width:34px;height:1px;background:#dcdcdc"></div>
<div class="a t" style="top:718.68px;font-size:16.5px;line-height:16.5px;color:#444;font-family:'Liberation Serif', serif;left:47.25px;width:34px;text-align:center;">15</div>
<div class="a" style="left:47px;top:760px;width:34px;height:1px;background:#dcdcdc"></div>
<div class="a t" style="top:742.68px;font-size:16.5px;line-height:16.5px;color:#444;font-family:'Liberation Serif', serif;left:47.25px;width:34px;text-align:center;">16</div>
<div class="a" style="left:47px;top:784px;width:34px;height:1px;background:#dcdcdc"></div>
<div class="a t" style="top:766.68px;font-size:16.5px;line-height:16.5px;color:#444;font-family:'Liberation Serif', serif;left:47.25px;width:34px;text-align:center;">17</div>
<div class="a" style="left:47px;top:832px;width:34px;height:1px;background:#dcdcdc"></div>
<div class="a t" style="top:814.68px;font-size:16.5px;line-height:16.5px;color:#444;font-family:'Liberation Serif', serif;left:47.25px;width:34px;text-align:center;">18</div>
<div class="a" style="left:47px;top:856px;width:34px;height:1px;background:#dcdcdc"></div>
<div class="a t" style="top:838.68px;font-size:16.5px;line-height:16.5px;color:#444;font-family:'Liberation Serif', serif;left:47.25px;width:34px;text-align:center;">19</div>
<div class="a" style="left:47px;top:880px;width:34px;height:1px;background:#dcdcdc"></div>
<div class="a t" style="top:862.68px;font-size:16.5px;line-height:16.5px;color:#444;font-family:'Liberation Serif', serif;left:47.25px;width:34px;text-align:center;">20</div>
<div class="a" style="left:47px;top:904px;width:34px;height:1px;background:#dcdcdc"></div>
<div class="a t" style="top:886.68px;font-size:16.5px;line-height:16.5px;color:#444;font-family:'Liberation Serif', serif;left:47.25px;width:34px;text-align:center;">21</div>
<div class="a" style="left:47px;top:928px;width:34px;height:1px;background:#dcdcdc"></div>
<div class="a t" style="top:910.68px;font-size:16.5px;line-height:16.5px;color:#444;font-family:'Liberation Serif', serif;left:47.25px;width:34px;text-align:center;">22</div>
<div class="a t" style="top:958.68px;font-size:16.5px;line-height:16.5px;color:#444;font-family:'Liberation Serif', serif;left:47.25px;width:34px;text-align:center;">23</div>
<div class="a" style="left:2px;top:402px;width:21px;height:21px;background:#e8e8e8;border:1px solid #8f8f8f;box-sizing:border-box"></div>
<div class="a" style="left:8px;top:412px;width:9px;height:2px;background:#555"></div>
<div class="a" style="left:9px;top:423px;width:2px;height:515px;background:#a6a6a6"></div>
<div class="a" style="left:30px;top:436px;width:2px;height:2px;background:#888"></div>
<div class="a" style="left:30px;top:472px;width:2px;height:2px;background:#888"></div>
<div class="a" style="left:30px;top:520px;width:2px;height:2px;background:#888"></div>
<div class="a" style="left:30px;top:556px;width:2px;height:2px;background:#888"></div>
<div class="a" style="left:30px;top:580px;width:2px;height:2px;background:#888"></div>
<div class="a" style="left:30px;top:616px;width:2px;height:2px;background:#888"></div>
<div class="a" style="left:30px;top:652px;width:2px;height:2px;background:#888"></div>
<div class="a" style="left:30px;top:676px;width:2px;height:2px;background:#888"></div>
<div class="a" style="left:30px;top:700px;width:2px;height:2px;background:#888"></div>
<div class="a" style="left:30px;top:724px;width:2px;height:2px;background:#888"></div>
<div class="a" style="left:30px;top:748px;width:2px;height:2px;background:#888"></div>
<div class="a" style="left:30px;top:772px;width:2px;height:2px;background:#888"></div>
<div class="a" style="left:30px;top:808px;width:2px;height:2px;background:#888"></div>
<div class="a" style="left:30px;top:844px;width:2px;height:2px;background:#888"></div>
<div class="a" style="left:30px;top:868px;width:2px;height:2px;background:#888"></div>
<div class="a" style="left:30px;top:892px;width:2px;height:2px;background:#888"></div>
<div class="a" style="left:30px;top:916px;width:2px;height:2px;background:#888"></div>
<div class="a" style="left:81px;top:296px;width:1528px;height:1px;background:#dadada"></div>
<div class="a" style="left:145px;top:296px;width:1px;height:24px;background:#dadada"></div>
<div class="a" style="left:315px;top:296px;width:1px;height:24px;background:#dadada"></div>
<div class="a" style="left:693px;top:296px;width:1px;height:24px;background:#dadada"></div>
<div class="a" style="left:814px;top:296px;width:1px;height:24px;background:#dadada"></div>
<div class="a" style="left:1273px;top:296px;width:1px;height:24px;background:#dadada"></div>
<div class="a" style="left:1273px;top:264px;width:1px;height:32px;background:#dadada"></div>
<div class="a" style="left:1380px;top:296px;width:1px;height:24px;background:#dadada"></div>
<div class="a" style="left:1380px;top:264px;width:1px;height:32px;background:#dadada"></div>
<div class="a" style="left:1487px;top:296px;width:1px;height:24px;background:#dadada"></div>
<div class="a" style="left:1487px;top:264px;width:1px;height:32px;background:#dadada"></div>
<div class="a" style="left:1594px;top:296px;width:1px;height:24px;background:#dadada"></div>
<div class="a" style="left:1594px;top:264px;width:1px;height:32px;background:#dadada"></div>
<div class="a t" style="top:267.73px;font-size:26px;line-height:26px;color:#0c0cc6;font-family:'Liberation Serif', serif;font-weight:700;left:216.00px;">QUẢN LÝ FILES <span style="color:#e8731f">(PHẦN MỀM QUẢN LÝ TÀI LIỆU DỰ ÁN GXD)</span></div>
<div class="a" style="left:81px;top:320px;width:1528px;height:54px;background:#8edffb"></div>
<div class="a" style="left:81px;top:374px;width:1528px;height:26px;background:#fff"></div>
<div class="a" style="left:81px;top:400px;width:1528px;height:24px;background:#9dfdca"></div>
<div class="a" style="left:81px;top:320px;width:1528px;height:1px;background:#000"></div>
<div class="a" style="left:81px;top:321px;width:1528px;height:1px;background:#666"></div>
<div class="a" style="left:81px;top:374px;width:1528px;height:1px;background:#111"></div>
<div class="a" style="left:81px;top:400px;width:1528px;height:1px;background:#111"></div>
<div class="a" style="left:81px;top:424px;width:1528px;height:1px;background:#111"></div>
<div class="a t" style="top:340.51px;font-size:17.3px;line-height:17.3px;color:#000;font-family:'Liberation Serif', serif;font-weight:700;left:-36.50px;width:300px;text-align:center;letter-spacing:0.3px;">STT</div>
<div class="a t" style="top:340.51px;font-size:17.3px;line-height:17.3px;color:#000;font-family:'Liberation Serif', serif;font-weight:700;left:80.50px;width:300px;text-align:center;letter-spacing:0.3px;">Thư mục</div>
<div class="a t" style="top:340.51px;font-size:17.3px;line-height:17.3px;color:#000;font-family:'Liberation Serif', serif;font-weight:700;left:354.50px;width:300px;text-align:center;letter-spacing:0.3px;">Tên file</div>
<div class="a t" style="top:340.51px;font-size:17.3px;line-height:17.3px;color:#000;font-family:'Liberation Serif', serif;font-weight:700;left:604.00px;width:300px;text-align:center;letter-spacing:0.3px;">Kiểu file</div>
<div class="a t" style="top:340.51px;font-size:17.3px;line-height:17.3px;color:#000;font-family:'Liberation Serif', serif;font-weight:700;left:894.00px;width:300px;text-align:center;letter-spacing:0.3px;">Nội dung / Mô tả</div>
<div class="a t" style="top:340.51px;font-size:17.3px;line-height:17.3px;color:#000;font-family:'Liberation Serif', serif;font-weight:700;left:1177.00px;width:300px;text-align:center;letter-spacing:0.3px;">Mở file</div>
<div class="a t" style="top:329.51px;font-size:17.3px;line-height:17.3px;color:#000;font-family:'Liberation Serif', serif;font-weight:700;left:1284.00px;width:300px;text-align:center;letter-spacing:0.3px;">Đơn vị thực</div>
<div class="a t" style="top:351.51px;font-size:17.3px;line-height:17.3px;color:#000;font-family:'Liberation Serif', serif;font-weight:700;left:1284.00px;width:300px;text-align:center;letter-spacing:0.3px;">hiện</div>
<div class="a t" style="top:329.51px;font-size:17.3px;line-height:17.3px;color:#000;font-family:'Liberation Serif', serif;font-weight:700;left:1391.00px;width:300px;text-align:center;letter-spacing:0.3px;">Thời gian</div>
<div class="a t" style="top:351.51px;font-size:17.3px;line-height:17.3px;color:#000;font-family:'Liberation Serif', serif;font-weight:700;left:1391.00px;width:300px;text-align:center;letter-spacing:0.3px;">thực hiện</div>
<div class="a t" style="top:329.51px;font-size:17.3px;line-height:17.3px;color:#000;font-family:'Liberation Serif', serif;font-weight:700;left:1603.00px;">Ghi chú</div>
<div class="a t" style="top:382.01px;font-size:17.3px;line-height:17.3px;color:#000;font-family:'Liberation Serif', serif;left:83.50px;width:60px;text-align:center;letter-spacing:0.28px;">[1]</div>
<div class="a" style="left:124px;top:378px;width:20px;height:21px;background:linear-gradient(#fbfbfb,#ececec);border:1px solid #c8c8c8;box-sizing:border-box"></div>
<svg class="a" style="left:130px;top:387px;" width="8" height="4" viewBox="0 0 8 4"><path d="M0 0h8l-4 4z" fill="#6a6a6a"/></svg>
<div class="a t" style="top:382.01px;font-size:17.3px;line-height:17.3px;color:#000;font-family:'Liberation Serif', serif;left:200.50px;width:60px;text-align:center;letter-spacing:0.28px;">[2]</div>
<div class="a" style="left:294px;top:378px;width:20px;height:21px;background:linear-gradient(#fbfbfb,#ececec);border:1px solid #c8c8c8;box-sizing:border-box"></div>
<svg class="a" style="left:300px;top:387px;" width="8" height="4" viewBox="0 0 8 4"><path d="M0 0h8l-4 4z" fill="#6a6a6a"/></svg>
<div class="a t" style="top:382.01px;font-size:17.3px;line-height:17.3px;color:#000;font-family:'Liberation Serif', serif;left:474.50px;width:60px;text-align:center;letter-spacing:0.28px;">[3]</div>
<div class="a" style="left:672px;top:378px;width:20px;height:21px;background:linear-gradient(#fbfbfb,#ececec);border:1px solid #c8c8c8;box-sizing:border-box"></div>
<svg class="a" style="left:678px;top:387px;" width="8" height="4" viewBox="0 0 8 4"><path d="M0 0h8l-4 4z" fill="#6a6a6a"/></svg>
<div class="a t" style="top:382.01px;font-size:17.3px;line-height:17.3px;color:#000;font-family:'Liberation Serif', serif;left:724.00px;width:60px;text-align:center;letter-spacing:0.28px;">[4]</div>
<div class="a" style="left:793px;top:378px;width:20px;height:21px;background:linear-gradient(#fbfbfb,#ececec);border:1px solid #c8c8c8;box-sizing:border-box"></div>
<svg class="a" style="left:799px;top:387px;" width="8" height="4" viewBox="0 0 8 4"><path d="M0 0h8l-4 4z" fill="#6a6a6a"/></svg>
<div class="a t" style="top:382.01px;font-size:17.3px;line-height:17.3px;color:#000;font-family:'Liberation Serif', serif;left:1014.00px;width:60px;text-align:center;letter-spacing:0.28px;">[5]</div>
<div class="a" style="left:1252px;top:378px;width:20px;height:21px;background:linear-gradient(#fbfbfb,#ececec);border:1px solid #c8c8c8;box-sizing:border-box"></div>
<svg class="a" style="left:1258px;top:387px;" width="8" height="4" viewBox="0 0 8 4"><path d="M0 0h8l-4 4z" fill="#6a6a6a"/></svg>
<div class="a t" style="top:382.01px;font-size:17.3px;line-height:17.3px;color:#000;font-family:'Liberation Serif', serif;left:1297.00px;width:60px;text-align:center;letter-spacing:0.28px;">[6]</div>
<div class="a" style="left:1359px;top:378px;width:20px;height:21px;background:linear-gradient(#fbfbfb,#ececec);border:1px solid #c8c8c8;box-sizing:border-box"></div>
<svg class="a" style="left:1365px;top:387px;" width="8" height="4" viewBox="0 0 8 4"><path d="M0 0h8l-4 4z" fill="#6a6a6a"/></svg>
<div class="a t" style="top:382.01px;font-size:17.3px;line-height:17.3px;color:#000;font-family:'Liberation Serif', serif;left:1404.00px;width:60px;text-align:center;letter-spacing:0.28px;">[7]</div>
<div class="a" style="left:1466px;top:378px;width:20px;height:21px;background:linear-gradient(#fbfbfb,#ececec);border:1px solid #c8c8c8;box-sizing:border-box"></div>
<svg class="a" style="left:1472px;top:387px;" width="8" height="4" viewBox="0 0 8 4"><path d="M0 0h8l-4 4z" fill="#6a6a6a"/></svg>
<div class="a t" style="top:382.01px;font-size:17.3px;line-height:17.3px;color:#000;font-family:'Liberation Serif', serif;left:1511.00px;width:60px;text-align:center;letter-spacing:0.28px;">[8]</div>
<div class="a" style="left:1573px;top:378px;width:20px;height:21px;background:linear-gradient(#fbfbfb,#ececec);border:1px solid #c8c8c8;box-sizing:border-box"></div>
<svg class="a" style="left:1579px;top:387px;" width="8" height="4" viewBox="0 0 8 4"><path d="M0 0h8l-4 4z" fill="#6a6a6a"/></svg>
<div class="a" style="left:1680px;top:378px;width:20px;height:21px;background:linear-gradient(#fbfbfb,#ececec);border:1px solid #c8c8c8;box-sizing:border-box"></div>
<svg class="a" style="left:1686px;top:387px;" width="8" height="4" viewBox="0 0 8 4"><path d="M0 0h8l-4 4z" fill="#6a6a6a"/></svg>
<div class="a t" style="top:405.01px;font-size:17.3px;line-height:17.3px;color:#000;font-family:'Liberation Serif', serif;font-weight:700;left:170.50px;width:120px;text-align:center;">GPMB</div>
<div class="a" style="left:0;top:0;width:1609px;height:938px;overflow:hidden">
<div class="a t" style="top:430.01px;font-size:17.3px;line-height:17.3px;color:#000;font-family:'Liberation Serif', serif;left:83.50px;width:60px;text-align:center;letter-spacing:0.25px;word-spacing:0.29px;">1</div>
<div class="a t" style="top:430.01px;font-size:17.3px;line-height:17.3px;color:#000;font-family:'Liberation Serif', serif;left:150.50px;width:160px;text-align:center;letter-spacing:0.25px;word-spacing:0.29px;">GPMB</div>
<div class="a t" style="top:430.01px;font-size:17.3px;line-height:17.3px;color:#000;font-family:'Liberation Serif', serif;left:699.00px;width:110px;text-align:center;letter-spacing:0.25px;word-spacing:0.29px;">doc</div>
<div class="a t" style="top:429.20px;font-size:16.3px;line-height:16.3px;color:#1a1aa8;font-family:'Liberation Sans', sans-serif;left:1277.00px;width:100px;text-align:center;text-decoration:underline;text-underline-offset:2px;">Mở file</div>
<div class="a t" style="top:430.01px;font-size:17.3px;line-height:17.3px;color:#000;font-family:'Liberation Serif', serif;left:319.50px;letter-spacing:0.25px;word-spacing:0.29px;">Boi<span style="letter-spacing:-0.05px">-</span>thuong<span style="letter-spacing:-0.05px">-</span>cho<span style="letter-spacing:-0.05px">-</span>3<span style="letter-spacing:-0.05px">-</span>ho<span style="letter-spacing:-0.05px">-</span>cung<span style="letter-spacing:-0.05px">-</span>1<span style="letter-spacing:-0.05px">-</span>khu<span style="letter-spacing:-0.05px">-</span>vuc</div>
<div class="a t" style="top:430.01px;font-size:17.3px;line-height:17.3px;color:#000;font-family:'Liberation Serif', serif;left:818.50px;letter-spacing:0.25px;word-spacing:0.29px;">Hướng dẫn sử dụng phần mềm Giải phóng mặt bằng</div>
<div class="a" style="left:81px;top:448px;width:1528px;height:1px;background:repeating-linear-gradient(90deg,#111 0 2px,transparent 2px 4px)"></div>
<div class="a t" style="top:465.01px;font-size:17.3px;line-height:17.3px;color:#000;font-family:'Liberation Serif', serif;left:83.50px;width:60px;text-align:center;letter-spacing:0.25px;word-spacing:0.29px;">2</div>
<div class="a t" style="top:465.01px;font-size:17.3px;line-height:17.3px;color:#000;font-family:'Liberation Serif', serif;left:150.50px;width:160px;text-align:center;letter-spacing:0.25px;word-spacing:0.29px;">GPMB</div>
<div class="a t" style="top:465.01px;font-size:17.3px;line-height:17.3px;color:#000;font-family:'Liberation Serif', serif;left:699.00px;width:110px;text-align:center;letter-spacing:0.25px;word-spacing:0.29px;">approj</div>
<div class="a t" style="top:464.70px;font-size:16.3px;line-height:16.3px;color:#1a1aa8;font-family:'Liberation Sans', sans-serif;left:1277.00px;width:100px;text-align:center;text-decoration:underline;text-underline-offset:2px;">Mở file</div>
<div class="a t" style="top:454.01px;font-size:17.3px;line-height:17.3px;color:#000;font-family:'Liberation Serif', serif;left:319.50px;letter-spacing:0.25px;word-spacing:0.29px;">chiet<span style="letter-spacing:-0.05px">-</span>tinh<span style="letter-spacing:-0.05px">-</span>don<span style="letter-spacing:-0.05px">-</span>gia<span style="letter-spacing:-0.05px">-</span>den<span style="letter-spacing:-0.05px">-</span>bu<span style="letter-spacing:-0.05px">-</span>doi<span style="letter-spacing:-0.05px">-</span>voi<span style="letter-spacing:-0.05px">-</span>nhung<span style="letter-spacing:-0.05px">-</span>cong<span style="letter-spacing:-0.05px">-</span>viec<span style="letter-spacing:-0.05px">-</span></div>
<div class="a t" style="top:477.01px;font-size:17.3px;line-height:17.3px;color:#000;font-family:'Liberation Serif', serif;left:319.50px;letter-spacing:0.25px;word-spacing:0.29px;">khong<span style="letter-spacing:-0.05px">-</span>co<span style="letter-spacing:-0.05px">-</span>dong<span style="letter-spacing:-0.05px">-</span>gia<span style="letter-spacing:-0.05px">-</span>cong<span style="letter-spacing:-0.05px">-</span>b</div>
<div class="a t" style="top:454.01px;font-size:17.3px;line-height:17.3px;color:#000;font-family:'Liberation Serif', serif;left:818.50px;letter-spacing:0.25px;word-spacing:0.29px;">chiet tinh don gia den bu doi voi nhung cong viec khong co</div>
<div class="a t" style="top:477.01px;font-size:17.3px;line-height:17.3px;color:#000;font-family:'Liberation Serif', serif;left:818.50px;letter-spacing:0.25px;word-spacing:0.29px;">dong gia cong b</div>
<div class="a" style="left:81px;top:496px;width:1528px;height:1px;background:repeating-linear-gradient(90deg,#111 0 2px,transparent 2px 4px)"></div>
<div class="a t" style="top:513.01px;font-size:17.3px;line-height:17.3px;color:#000;font-family:'Liberation Serif', serif;left:83.50px;width:60px;text-align:center;letter-spacing:0.25px;word-spacing:0.29px;">3</div>
<div class="a t" style="top:513.01px;font-size:17.3px;line-height:17.3px;color:#000;font-family:'Liberation Serif', serif;left:150.50px;width:160px;text-align:center;letter-spacing:0.25px;word-spacing:0.29px;">GPMB</div>
<div class="a t" style="top:513.01px;font-size:17.3px;line-height:17.3px;color:#000;font-family:'Liberation Serif', serif;left:699.00px;width:110px;text-align:center;letter-spacing:0.25px;word-spacing:0.29px;">approj</div>
<div class="a t" style="top:512.70px;font-size:16.3px;line-height:16.3px;color:#1a1aa8;font-family:'Liberation Sans', sans-serif;left:1277.00px;width:100px;text-align:center;text-decoration:underline;text-underline-offset:2px;">Mở file</div>
<div class="a t" style="top:502.01px;font-size:17.3px;line-height:17.3px;color:#000;font-family:'Liberation Serif', serif;left:319.50px;letter-spacing:0.25px;word-spacing:0.29px;">chon<span style="letter-spacing:-0.05px">-</span>co<span style="letter-spacing:-0.05px">-</span>so<span style="letter-spacing:-0.05px">-</span>du<span style="letter-spacing:-0.05px">-</span>lieu<span style="letter-spacing:-0.05px">-</span>xac<span style="letter-spacing:-0.05px">-</span>dinh<span style="letter-spacing:-0.05px">-</span>dia<span style="letter-spacing:-0.05px">-</span>phuong<span style="letter-spacing:-0.05px">-</span>chuan<span style="letter-spacing:-0.05px">-</span>bi<span style="letter-spacing:-0.05px">-</span></div>
<div class="a t" style="top:525.01px;font-size:17.3px;line-height:17.3px;color:#000;font-family:'Liberation Serif', serif;left:319.50px;letter-spacing:0.25px;word-spacing:0.29px;">lam<span style="letter-spacing:-0.05px">-</span>quen<span style="letter-spacing:-0.05px">-</span>GPMB<span style="letter-spacing:-0.05px">-</span>GXD</div>
<div class="a t" style="top:502.01px;font-size:17.3px;line-height:17.3px;color:#000;font-family:'Liberation Serif', serif;left:818.50px;letter-spacing:0.25px;word-spacing:0.29px;">chon co so du lieu xac dinh dia phuong chuan bi lam quen</div>
<div class="a t" style="top:525.01px;font-size:17.3px;line-height:17.3px;color:#000;font-family:'Liberation Serif', serif;left:818.50px;letter-spacing:0.25px;word-spacing:0.29px;">GPMB GXD</div>
<div class="a" style="left:81px;top:544px;width:1528px;height:1px;background:repeating-linear-gradient(90deg,#111 0 2px,transparent 2px 4px)"></div>
<div class="a t" style="top:550.01px;font-size:17.3px;line-height:17.3px;color:#000;font-family:'Liberation Serif', serif;left:83.50px;width:60px;text-align:center;letter-spacing:0.25px;word-spacing:0.29px;">4</div>
<div class="a t" style="top:550.01px;font-size:17.3px;line-height:17.3px;color:#000;font-family:'Liberation Serif', serif;left:150.50px;width:160px;text-align:center;letter-spacing:0.25px;word-spacing:0.29px;">GPMB</div>
<div class="a t" style="top:550.01px;font-size:17.3px;line-height:17.3px;color:#000;font-family:'Liberation Serif', serif;left:699.00px;width:110px;text-align:center;letter-spacing:0.25px;word-spacing:0.29px;">xlsx</div>
<div class="a t" style="top:549.20px;font-size:16.3px;line-height:16.3px;color:#1a1aa8;font-family:'Liberation Sans', sans-serif;left:1277.00px;width:100px;text-align:center;text-decoration:underline;text-underline-offset:2px;">Mở file</div>
<div class="a t" style="top:550.01px;font-size:17.3px;line-height:17.3px;color:#000;font-family:'Liberation Serif', serif;left:319.50px;letter-spacing:0.25px;word-spacing:0.29px;">danh<span style="letter-spacing:-0.05px">-</span>sach<span style="letter-spacing:-0.05px">-</span>gui<span style="letter-spacing:-0.05px">-</span>phan<span style="letter-spacing:-0.05px">-</span>mem<span style="letter-spacing:-0.05px">-</span>du<span style="letter-spacing:-0.05px">-</span>toan<span style="letter-spacing:-0.05px">-</span>GPMB</div>
<div class="a t" style="top:550.01px;font-size:17.3px;line-height:17.3px;color:#000;font-family:'Liberation Serif', serif;left:818.50px;letter-spacing:0.25px;word-spacing:0.29px;">danh sach gui phan mem du toan GPMB</div>
<div class="a" style="left:81px;top:568px;width:1528px;height:1px;background:repeating-linear-gradient(90deg,#111 0 2px,transparent 2px 4px)"></div>
<div class="a t" style="top:574.01px;font-size:17.3px;line-height:17.3px;color:#000;font-family:'Liberation Serif', serif;left:83.50px;width:60px;text-align:center;letter-spacing:0.25px;word-spacing:0.29px;">5</div>
<div class="a t" style="top:574.01px;font-size:17.3px;line-height:17.3px;color:#000;font-family:'Liberation Serif', serif;left:150.50px;width:160px;text-align:center;letter-spacing:0.25px;word-spacing:0.29px;">GPMB</div>
<div class="a t" style="top:574.01px;font-size:17.3px;line-height:17.3px;color:#000;font-family:'Liberation Serif', serif;left:699.00px;width:110px;text-align:center;letter-spacing:0.25px;word-spacing:0.29px;">rar</div>
<div class="a t" style="top:573.20px;font-size:16.3px;line-height:16.3px;color:#1a1aa8;font-family:'Liberation Sans', sans-serif;left:1277.00px;width:100px;text-align:center;text-decoration:underline;text-underline-offset:2px;">Mở file</div>
<div class="a t" style="top:574.01px;font-size:17.3px;line-height:17.3px;color:#000;font-family:'Liberation Serif', serif;left:319.50px;letter-spacing:0.25px;word-spacing:0.29px;">Giai phong mat bang all</div>
<div class="a t" style="top:574.01px;font-size:17.3px;line-height:17.3px;color:#000;font-family:'Liberation Serif', serif;left:818.50px;letter-spacing:0.25px;word-spacing:0.29px;">Giai phong mat bang all</div>
<div class="a" style="left:81px;top:592px;width:1528px;height:1px;background:repeating-linear-gradient(90deg,#111 0 2px,transparent 2px 4px)"></div>
<div class="a t" style="top:609.01px;font-size:17.3px;line-height:17.3px;color:#000;font-family:'Liberation Serif', serif;left:83.50px;width:60px;text-align:center;letter-spacing:0.25px;word-spacing:0.29px;">6</div>
<div class="a t" style="top:609.01px;font-size:17.3px;line-height:17.3px;color:#000;font-family:'Liberation Serif', serif;left:150.50px;width:160px;text-align:center;letter-spacing:0.25px;word-spacing:0.29px;">GPMB</div>
<div class="a t" style="top:609.01px;font-size:17.3px;line-height:17.3px;color:#000;font-family:'Liberation Serif', serif;left:699.00px;width:110px;text-align:center;letter-spacing:0.25px;word-spacing:0.29px;">approj</div>
<div class="a t" style="top:608.70px;font-size:16.3px;line-height:16.3px;color:#1a1aa8;font-family:'Liberation Sans', sans-serif;left:1277.00px;width:100px;text-align:center;text-decoration:underline;text-underline-offset:2px;">Mở file</div>
<div class="a t" style="top:598.01px;font-size:17.3px;line-height:17.3px;color:#000;font-family:'Liberation Serif', serif;left:319.50px;letter-spacing:0.25px;word-spacing:0.29px;">gioi<span style="letter-spacing:-0.05px">-</span>thieu<span style="letter-spacing:-0.05px">-</span>phan<span style="letter-spacing:-0.05px">-</span>mem<span style="letter-spacing:-0.05px">-</span>GPMB<span style="letter-spacing:-0.05px">-</span>GXD<span style="letter-spacing:-0.05px">-</span>kenh<span style="letter-spacing:-0.05px">-</span>video<span style="letter-spacing:-0.05px">-</span>cac<span style="letter-spacing:-0.05px">-</span></div>
<div class="a t" style="top:621.01px;font-size:17.3px;line-height:17.3px;color:#000;font-family:'Liberation Serif', serif;left:319.50px;letter-spacing:0.25px;word-spacing:0.29px;">trang<span style="letter-spacing:-0.05px">-</span>thong<span style="letter-spacing:-0.05px">-</span>tin<span style="letter-spacing:-0.05px">-</span>cap<span style="letter-spacing:-0.05px">-</span>nhat<span style="letter-spacing:-0.05px">-</span>phan<span style="letter-spacing:-0.05px">-</span>mem</div>
<div class="a t" style="top:598.01px;font-size:17.3px;line-height:17.3px;color:#000;font-family:'Liberation Serif', serif;left:818.50px;letter-spacing:0.25px;word-spacing:0.29px;">gioi thieu phan mem GPMB GXD kenh video cac trang thong</div>
<div class="a t" style="top:621.01px;font-size:17.3px;line-height:17.3px;color:#000;font-family:'Liberation Serif', serif;left:818.50px;letter-spacing:0.25px;word-spacing:0.29px;">tin cap nhat phan mem</div>
<div class="a" style="left:81px;top:640px;width:1528px;height:1px;background:repeating-linear-gradient(90deg,#111 0 2px,transparent 2px 4px)"></div>
<div class="a t" style="top:646.01px;font-size:17.3px;line-height:17.3px;color:#000;font-family:'Liberation Serif', serif;left:83.50px;width:60px;text-align:center;letter-spacing:0.25px;word-spacing:0.29px;">7</div>
<div class="a t" style="top:646.01px;font-size:17.3px;line-height:17.3px;color:#000;font-family:'Liberation Serif', serif;left:150.50px;width:160px;text-align:center;letter-spacing:0.25px;word-spacing:0.29px;">GPMB</div>
<div class="a t" style="top:646.01px;font-size:17.3px;line-height:17.3px;color:#000;font-family:'Liberation Serif', serif;left:699.00px;width:110px;text-align:center;letter-spacing:0.25px;word-spacing:0.29px;">xlsm</div>
<div class="a t" style="top:645.20px;font-size:16.3px;line-height:16.3px;color:#1a1aa8;font-family:'Liberation Sans', sans-serif;left:1277.00px;width:100px;text-align:center;text-decoration:underline;text-underline-offset:2px;">Mở file</div>
<div class="a t" style="top:646.01px;font-size:17.3px;line-height:17.3px;color:#000;font-family:'Liberation Serif', serif;left:319.50px;letter-spacing:0.25px;word-spacing:0.29px;">GPMBGXD1</div>
<div class="a t" style="top:646.01px;font-size:17.3px;line-height:17.3px;color:#000;font-family:'Liberation Serif', serif;left:818.50px;letter-spacing:0.25px;word-spacing:0.29px;">GPMBGXD1</div>
<div class="a" style="left:81px;top:664px;width:1528px;height:1px;background:repeating-linear-gradient(90deg,#111 0 2px,transparent 2px 4px)"></div>
<div class="a t" style="top:670.01px;font-size:17.3px;line-height:17.3px;color:#000;font-family:'Liberation Serif', serif;left:83.50px;width:60px;text-align:center;letter-spacing:0.25px;word-spacing:0.29px;">8</div>
<div class="a t" style="top:670.01px;font-size:17.3px;line-height:17.3px;color:#000;font-family:'Liberation Serif', serif;left:150.50px;width:160px;text-align:center;letter-spacing:0.25px;word-spacing:0.29px;">GPMB</div>
<div class="a t" style="top:670.01px;font-size:17.3px;line-height:17.3px;color:#000;font-family:'Liberation Serif', serif;left:699.00px;width:110px;text-align:center;letter-spacing:0.25px;word-spacing:0.29px;">xlsx</div>
<div class="a t" style="top:669.20px;font-size:16.3px;line-height:16.3px;color:#1a1aa8;font-family:'Liberation Sans', sans-serif;left:1277.00px;width:100px;text-align:center;text-decoration:underline;text-underline-offset:2px;">Mở file</div>
<div class="a t" style="top:670.01px;font-size:17.3px;line-height:17.3px;color:#000;font-family:'Liberation Serif', serif;left:319.50px;letter-spacing:0.25px;word-spacing:0.29px;">GPMBGXD1</div>
<div class="a t" style="top:670.01px;font-size:17.3px;line-height:17.3px;color:#000;font-family:'Liberation Serif', serif;left:818.50px;letter-spacing:0.25px;word-spacing:0.29px;">GPMBGXD1</div>
<div class="a" style="left:81px;top:688px;width:1528px;height:1px;background:repeating-linear-gradient(90deg,#111 0 2px,transparent 2px 4px)"></div>
<div class="a t" style="top:694.01px;font-size:17.3px;line-height:17.3px;color:#000;font-family:'Liberation Serif', serif;left:83.50px;width:60px;text-align:center;letter-spacing:0.25px;word-spacing:0.29px;">9</div>
<div class="a t" style="top:694.01px;font-size:17.3px;line-height:17.3px;color:#000;font-family:'Liberation Serif', serif;left:150.50px;width:160px;text-align:center;letter-spacing:0.25px;word-spacing:0.29px;">GPMB</div>
<div class="a t" style="top:694.01px;font-size:17.3px;line-height:17.3px;color:#000;font-family:'Liberation Serif', serif;left:699.00px;width:110px;text-align:center;letter-spacing:0.25px;word-spacing:0.29px;">exe</div>
<div class="a t" style="top:693.20px;font-size:16.3px;line-height:16.3px;color:#1a1aa8;font-family:'Liberation Sans', sans-serif;left:1277.00px;width:100px;text-align:center;text-decoration:underline;text-underline-offset:2px;">Mở file</div>
<div class="a t" style="top:694.01px;font-size:17.3px;line-height:17.3px;color:#000;font-family:'Liberation Serif', serif;left:319.50px;letter-spacing:0.25px;word-spacing:0.29px;">GXDsoftGPMB</div>
<div class="a t" style="top:694.01px;font-size:17.3px;line-height:17.3px;color:#000;font-family:'Liberation Serif', serif;left:818.50px;letter-spacing:0.25px;word-spacing:0.29px;">GXDsoftGPMB</div>
<div class="a" style="left:81px;top:712px;width:1528px;height:1px;background:repeating-linear-gradient(90deg,#111 0 2px,transparent 2px 4px)"></div>
<div class="a t" style="top:718.01px;font-size:17.3px;line-height:17.3px;color:#000;font-family:'Liberation Serif', serif;left:83.50px;width:60px;text-align:center;letter-spacing:0.25px;word-spacing:0.29px;">10</div>
<div class="a t" style="top:718.01px;font-size:17.3px;line-height:17.3px;color:#000;font-family:'Liberation Serif', serif;left:150.50px;width:160px;text-align:center;letter-spacing:0.25px;word-spacing:0.29px;">GPMB</div>
<div class="a t" style="top:718.01px;font-size:17.3px;line-height:17.3px;color:#000;font-family:'Liberation Serif', serif;left:699.00px;width:110px;text-align:center;letter-spacing:0.25px;word-spacing:0.29px;">rar</div>
<div class="a t" style="top:717.20px;font-size:16.3px;line-height:16.3px;color:#1a1aa8;font-family:'Liberation Sans', sans-serif;left:1277.00px;width:100px;text-align:center;text-decoration:underline;text-underline-offset:2px;">Mở file</div>
<div class="a t" style="top:718.01px;font-size:17.3px;line-height:17.3px;color:#000;font-family:'Liberation Serif', serif;left:319.50px;letter-spacing:0.25px;word-spacing:0.29px;">GXDsoftGPMB</div>
<div class="a t" style="top:718.01px;font-size:17.3px;line-height:17.3px;color:#000;font-family:'Liberation Serif', serif;left:818.50px;letter-spacing:0.25px;word-spacing:0.29px;">GXDsoftGPMB</div>
<div class="a" style="left:81px;top:736px;width:1528px;height:1px;background:repeating-linear-gradient(90deg,#111 0 2px,transparent 2px 4px)"></div>
<div class="a t" style="top:742.01px;font-size:17.3px;line-height:17.3px;color:#000;font-family:'Liberation Serif', serif;left:83.50px;width:60px;text-align:center;letter-spacing:0.25px;word-spacing:0.29px;">11</div>
<div class="a t" style="top:742.01px;font-size:17.3px;line-height:17.3px;color:#000;font-family:'Liberation Serif', serif;left:150.50px;width:160px;text-align:center;letter-spacing:0.25px;word-spacing:0.29px;">GPMB</div>
<div class="a t" style="top:742.01px;font-size:17.3px;line-height:17.3px;color:#000;font-family:'Liberation Serif', serif;left:699.00px;width:110px;text-align:center;letter-spacing:0.25px;word-spacing:0.29px;">rar</div>
<div class="a t" style="top:741.20px;font-size:16.3px;line-height:16.3px;color:#1a1aa8;font-family:'Liberation Sans', sans-serif;left:1277.00px;width:100px;text-align:center;text-decoration:underline;text-underline-offset:2px;">Mở file</div>
<div class="a t" style="top:742.01px;font-size:17.3px;line-height:17.3px;color:#000;font-family:'Liberation Serif', serif;left:319.50px;letter-spacing:0.25px;word-spacing:0.29px;">HaNoi</div>
<div class="a t" style="top:742.01px;font-size:17.3px;line-height:17.3px;color:#000;font-family:'Liberation Serif', serif;left:818.50px;letter-spacing:0.25px;word-spacing:0.29px;">HaNoi</div>
<div class="a" style="left:81px;top:760px;width:1528px;height:1px;background:repeating-linear-gradient(90deg,#111 0 2px,transparent 2px 4px)"></div>
<div class="a t" style="top:766.01px;font-size:17.3px;line-height:17.3px;color:#000;font-family:'Liberation Serif', serif;left:83.50px;width:60px;text-align:center;letter-spacing:0.25px;word-spacing:0.29px;">12</div>
<div class="a t" style="top:766.01px;font-size:17.3px;line-height:17.3px;color:#000;font-family:'Liberation Serif', serif;left:150.50px;width:160px;text-align:center;letter-spacing:0.25px;word-spacing:0.29px;">GPMB</div>
<div class="a t" style="top:766.01px;font-size:17.3px;line-height:17.3px;color:#000;font-family:'Liberation Serif', serif;left:699.00px;width:110px;text-align:center;letter-spacing:0.25px;word-spacing:0.29px;">approj</div>
<div class="a t" style="top:765.20px;font-size:16.3px;line-height:16.3px;color:#1a1aa8;font-family:'Liberation Sans', sans-serif;left:1277.00px;width:100px;text-align:center;text-decoration:underline;text-underline-offset:2px;">Mở file</div>
<div class="a t" style="top:766.01px;font-size:17.3px;line-height:17.3px;color:#000;font-family:'Liberation Serif', serif;left:319.50px;letter-spacing:0.25px;word-spacing:0.29px;">huong<span style="letter-spacing:-0.05px">-</span>dan<span style="letter-spacing:-0.05px">-</span>cai<span style="letter-spacing:-0.05px">-</span>phan<span style="letter-spacing:-0.05px">-</span>mem<span style="letter-spacing:-0.05px">-</span>GPMB<span style="letter-spacing:-0.05px">-</span>GXD</div>
<div class="a t" style="top:766.01px;font-size:17.3px;line-height:17.3px;color:#000;font-family:'Liberation Serif', serif;left:818.50px;letter-spacing:0.25px;word-spacing:0.29px;">huong dan cai phan mem GPMB GXD</div>
<div class="a" style="left:81px;top:784px;width:1528px;height:1px;background:repeating-linear-gradient(90deg,#111 0 2px,transparent 2px 4px)"></div>
<div class="a t" style="top:801.01px;font-size:17.3px;line-height:17.3px;color:#000;font-family:'Liberation Serif', serif;left:83.50px;width:60px;text-align:center;letter-spacing:0.25px;word-spacing:0.29px;">13</div>
<div class="a t" style="top:801.01px;font-size:17.3px;line-height:17.3px;color:#000;font-family:'Liberation Serif', serif;left:150.50px;width:160px;text-align:center;letter-spacing:0.25px;word-spacing:0.29px;">GPMB</div>
<div class="a t" style="top:801.01px;font-size:17.3px;line-height:17.3px;color:#000;font-family:'Liberation Serif', serif;left:699.00px;width:110px;text-align:center;letter-spacing:0.25px;word-spacing:0.29px;">doc</div>
<div class="a t" style="top:800.70px;font-size:16.3px;line-height:16.3px;color:#1a1aa8;font-family:'Liberation Sans', sans-serif;left:1277.00px;width:100px;text-align:center;text-decoration:underline;text-underline-offset:2px;">Mở file</div>
<div class="a t" style="top:801.01px;font-size:17.3px;line-height:17.3px;color:#000;font-family:'Liberation Serif', serif;left:319.50px;letter-spacing:0.25px;word-spacing:0.29px;">HuongDanNhapCSDL<span style="letter-spacing:-0.05px">-</span>GPMB</div>
<div class="a t" style="top:790.01px;font-size:17.3px;line-height:17.3px;color:#000;font-family:'Liberation Serif', serif;left:818.50px;letter-spacing:0.25px;word-spacing:0.29px;">HƯỚNG DẪN SỬ DỤNG&nbsp;&nbsp;&nbsp;&nbsp;&nbsp;&nbsp; PHẦN MỀM LẬP PHƯƠNG</div>
<div class="a t" style="top:813.01px;font-size:17.3px;line-height:17.3px;color:#000;font-family:'Liberation Serif', serif;left:818.50px;letter-spacing:0.25px;word-spacing:0.29px;">ÁN GIẢI PHÓNG MẶT BẰNG GXD</div>
<div class="a" style="left:81px;top:832px;width:1528px;height:1px;background:repeating-linear-gradient(90deg,#111 0 2px,transparent 2px 4px)"></div>
<div class="a t" style="top:838.01px;font-size:17.3px;line-height:17.3px;color:#000;font-family:'Liberation Serif', serif;left:83.50px;width:60px;text-align:center;letter-spacing:0.25px;word-spacing:0.29px;">14</div>
<div class="a t" style="top:838.01px;font-size:17.3px;line-height:17.3px;color:#000;font-family:'Liberation Serif', serif;left:150.50px;width:160px;text-align:center;letter-spacing:0.25px;word-spacing:0.29px;">GPMB</div>
<div class="a t" style="top:838.01px;font-size:17.3px;line-height:17.3px;color:#000;font-family:'Liberation Serif', serif;left:699.00px;width:110px;text-align:center;letter-spacing:0.25px;word-spacing:0.29px;">jpg</div>
<div class="a t" style="top:837.20px;font-size:16.3px;line-height:16.3px;color:#1a1aa8;font-family:'Liberation Sans', sans-serif;left:1277.00px;width:100px;text-align:center;text-decoration:underline;text-underline-offset:2px;">Mở file</div>
<div class="a t" style="top:838.01px;font-size:17.3px;line-height:17.3px;color:#000;font-family:'Liberation Serif', serif;left:319.50px;letter-spacing:0.25px;word-spacing:0.29px;">IMG_20180710_084927</div>
<div class="a t" style="top:838.01px;font-size:17.3px;line-height:17.3px;color:#000;font-family:'Liberation Serif', serif;left:818.50px;letter-spacing:0.25px;word-spacing:0.29px;">IMG 20180710 084927</div>
<div class="a" style="left:81px;top:856px;width:1528px;height:1px;background:repeating-linear-gradient(90deg,#111 0 2px,transparent 2px 4px)"></div>
<div class="a t" style="top:862.01px;font-size:17.3px;line-height:17.3px;color:#000;font-family:'Liberation Serif', serif;left:83.50px;width:60px;text-align:center;letter-spacing:0.25px;word-spacing:0.29px;">15</div>
<div class="a t" style="top:862.01px;font-size:17.3px;line-height:17.3px;color:#000;font-family:'Liberation Serif', serif;left:150.50px;width:160px;text-align:center;letter-spacing:0.25px;word-spacing:0.29px;">GPMB</div>
<div class="a t" style="top:862.01px;font-size:17.3px;line-height:17.3px;color:#000;font-family:'Liberation Serif', serif;left:699.00px;width:110px;text-align:center;letter-spacing:0.25px;word-spacing:0.29px;">jpg</div>
<div class="a t" style="top:861.20px;font-size:16.3px;line-height:16.3px;color:#1a1aa8;font-family:'Liberation Sans', sans-serif;left:1277.00px;width:100px;text-align:center;text-decoration:underline;text-underline-offset:2px;">Mở file</div>
<div class="a t" style="top:862.01px;font-size:17.3px;line-height:17.3px;color:#000;font-family:'Liberation Serif', serif;left:319.50px;letter-spacing:0.25px;word-spacing:0.29px;">IMG_20180710_085022</div>
<div class="a t" style="top:862.01px;font-size:17.3px;line-height:17.3px;color:#000;font-family:'Liberation Serif', serif;left:818.50px;letter-spacing:0.25px;word-spacing:0.29px;">IMG 20180710 085022</div>
<div class="a" style="left:81px;top:880px;width:1528px;height:1px;background:repeating-linear-gradient(90deg,#111 0 2px,transparent 2px 4px)"></div>
<div class="a t" style="top:886.01px;font-size:17.3px;line-height:17.3px;color:#000;font-family:'Liberation Serif', serif;left:83.50px;width:60px;text-align:center;letter-spacing:0.25px;word-spacing:0.29px;">16</div>
<div class="a t" style="top:886.01px;font-size:17.3px;line-height:17.3px;color:#000;font-family:'Liberation Serif', serif;left:150.50px;width:160px;text-align:center;letter-spacing:0.25px;word-spacing:0.29px;">GPMB</div>
<div class="a t" style="top:886.01px;font-size:17.3px;line-height:17.3px;color:#000;font-family:'Liberation Serif', serif;left:699.00px;width:110px;text-align:center;letter-spacing:0.25px;word-spacing:0.29px;">jpg</div>
<div class="a t" style="top:885.20px;font-size:16.3px;line-height:16.3px;color:#1a1aa8;font-family:'Liberation Sans', sans-serif;left:1277.00px;width:100px;text-align:center;text-decoration:underline;text-underline-offset:2px;">Mở file</div>
<div class="a t" style="top:886.01px;font-size:17.3px;line-height:17.3px;color:#000;font-family:'Liberation Serif', serif;left:319.50px;letter-spacing:0.25px;word-spacing:0.29px;">IMG_20180710_085033</div>
<div class="a t" style="top:886.01px;font-size:17.3px;line-height:17.3px;color:#000;font-family:'Liberation Serif', serif;left:818.50px;letter-spacing:0.25px;word-spacing:0.29px;">IMG 20180710 085033</div>
<div class="a" style="left:81px;top:904px;width:1528px;height:1px;background:repeating-linear-gradient(90deg,#111 0 2px,transparent 2px 4px)"></div>
<div class="a t" style="top:910.01px;font-size:17.3px;line-height:17.3px;color:#000;font-family:'Liberation Serif', serif;left:83.50px;width:60px;text-align:center;letter-spacing:0.25px;word-spacing:0.29px;">17</div>
<div class="a t" style="top:910.01px;font-size:17.3px;line-height:17.3px;color:#000;font-family:'Liberation Serif', serif;left:150.50px;width:160px;text-align:center;letter-spacing:0.25px;word-spacing:0.29px;">GPMB</div>
<div class="a t" style="top:910.01px;font-size:17.3px;line-height:17.3px;color:#000;font-family:'Liberation Serif', serif;left:699.00px;width:110px;text-align:center;letter-spacing:0.25px;word-spacing:0.29px;">jpg</div>
<div class="a t" style="top:909.20px;font-size:16.3px;line-height:16.3px;color:#1a1aa8;font-family:'Liberation Sans', sans-serif;left:1277.00px;width:100px;text-align:center;text-decoration:underline;text-underline-offset:2px;">Mở file</div>
<div class="a t" style="top:910.01px;font-size:17.3px;line-height:17.3px;color:#000;font-family:'Liberation Serif', serif;left:319.50px;letter-spacing:0.25px;word-spacing:0.29px;">IMG_20180710_085313</div>
<div class="a t" style="top:910.01px;font-size:17.3px;line-height:17.3px;color:#000;font-family:'Liberation Serif', serif;left:818.50px;letter-spacing:0.25px;word-spacing:0.29px;">IMG 20180710 085313</div>
<div class="a" style="left:81px;top:928px;width:1528px;height:1px;background:repeating-linear-gradient(90deg,#111 0 2px,transparent 2px 4px)"></div>
<div class="a t" style="top:943.01px;font-size:17.3px;line-height:17.3px;color:#000;font-family:'Liberation Serif', serif;left:83.50px;width:60px;text-align:center;letter-spacing:0.25px;word-spacing:0.29px;">18</div>
<div class="a t" style="top:943.01px;font-size:17.3px;line-height:17.3px;color:#000;font-family:'Liberation Serif', serif;left:150.50px;width:160px;text-align:center;letter-spacing:0.25px;word-spacing:0.29px;">GPMB</div>
<div class="a t" style="top:943.01px;font-size:17.3px;line-height:17.3px;color:#000;font-family:'Liberation Serif', serif;left:699.00px;width:110px;text-align:center;letter-spacing:0.25px;word-spacing:0.29px;">approj</div>
<div class="a t" style="top:944.70px;font-size:16.3px;line-height:16.3px;color:#1a1aa8;font-family:'Liberation Sans', sans-serif;left:1277.00px;width:100px;text-align:center;text-decoration:underline;text-underline-offset:2px;">Mở file</div>
<div class="a t" style="top:943.01px;font-size:17.3px;line-height:17.3px;color:#000;font-family:'Liberation Serif', serif;left:319.50px;letter-spacing:0.25px;word-spacing:0.29px;">khuong<span style="letter-spacing:-0.05px">-</span>dan<span style="letter-spacing:-0.05px">-</span>thiet<span style="letter-spacing:-0.05px">-</span>lap<span style="letter-spacing:-0.05px">-</span>du<span style="letter-spacing:-0.05px">-</span>lieu<span style="letter-spacing:-0.05px">-</span>phan<span style="letter-spacing:-0.05px">-</span>mem<span style="letter-spacing:-0.05px">-</span>GPMB</div>
<div class="a t" style="top:943.01px;font-size:17.3px;line-height:17.3px;color:#000;font-family:'Liberation Serif', serif;left:818.50px;letter-spacing:0.25px;word-spacing:0.29px;">khuong dan thiet lap du lieu phan mem GPMB</div>
<div class="a" style="left:81px;top:976px;width:1528px;height:1px;background:repeating-linear-gradient(90deg,#111 0 2px,transparent 2px 4px)"></div>
</div>
<div class="a" style="left:145px;top:320px;width:1px;height:618px;background:#111"></div>
<div class="a" style="left:315px;top:320px;width:1px;height:618px;background:#111"></div>
<div class="a" style="left:693px;top:320px;width:1px;height:618px;background:#111"></div>
<div class="a" style="left:814px;top:320px;width:1px;height:618px;background:#111"></div>
<div class="a" style="left:1273px;top:320px;width:1px;height:618px;background:#111"></div>
<div class="a" style="left:1380px;top:320px;width:1px;height:618px;background:#111"></div>
<div class="a" style="left:1487px;top:320px;width:1px;height:618px;background:#111"></div>
<div class="a" style="left:1594px;top:320px;width:1px;height:618px;background:#111"></div>
<div class="a" style="left:81px;top:399px;width:66px;height:27px;border:2px solid #217346;box-sizing:border-box"></div>
<div class="a" style="left:143px;top:422px;width:5px;height:5px;background:#217346;border:1px solid #fff;box-sizing:content-box"></div>
<div class="a" style="left:0px;top:938px;width:1609px;height:29px;background:#f3f3f3"></div>
<div class="a" style="left:0px;top:938px;width:1609px;height:1px;background:#bdbdbd"></div>
<div class="a" style="left:0px;top:967px;width:1609px;height:5px;background:#217346"></div>
<svg class="a" style="left:28px;top:948px;" width="6" height="10" viewBox="0 0 6 10"><path d="M6 0v10L0 5z" fill="#bdbdbd"/></svg>
<svg class="a" style="left:56px;top:948px;" width="6" height="10" viewBox="0 0 6 10"><path d="M0 0v10l6-5z" fill="#bdbdbd"/></svg>
<div class="a" style="left:105px;top:941px;width:83px;height:23px;background:#0fa0e6"></div>
<div class="a t" style="top:940.61px;font-size:17px;line-height:17px;color:#1a2a3a;font-family:'Liberation Sans', sans-serif;left:95.00px;width:103px;text-align:center;">Van ban</div>
<div class="a" style="left:192px;top:941px;width:86px;height:23px;background:linear-gradient(#ffffff,#f08c8c)"></div>
<div class="a t" style="top:941.03px;font-size:16.5px;line-height:16.5px;color:#2e6b3f;font-family:'Liberation Sans', sans-serif;font-weight:700;left:182.00px;width:106px;text-align:center;">Quan ly</div>
<div class="a" style="left:283px;top:941px;width:92px;height:23px;background:#12a24a"></div>
<div class="a t" style="top:940.61px;font-size:17px;line-height:17px;color:#13321e;font-family:'Liberation Sans', sans-serif;left:273.00px;width:112px;text-align:center;">Quy trinh</div>
<div class="a" style="left:380px;top:941px;width:94px;height:23px;background:#8ccf4d"></div>
<div class="a t" style="top:940.61px;font-size:17px;line-height:17px;color:#1b2a10;font-family:'Liberation Sans', sans-serif;left:370.00px;width:114px;text-align:center;">Bieu mau</div>
<div class="a" style="left:479px;top:941px;width:99px;height:23px;background:#8ccf4d"></div>
<div class="a t" style="top:940.61px;font-size:17px;line-height:17px;color:#1b2a10;font-family:'Liberation Sans', sans-serif;left:469.00px;width:119px;text-align:center;">Giao trinh</div>
<div class="a" style="left:583px;top:941px;width:105px;height:23px;background:#f3924c"></div>
<div class="a t" style="top:940.61px;font-size:17px;line-height:17px;color:#3a1e0c;font-family:'Liberation Sans', sans-serif;left:573.00px;width:125px;text-align:center;">Tieu chuan</div>
<div class="a" style="left:693px;top:941px;width:86px;height:23px;background:#46c7f5"></div>
<div class="a t" style="top:940.61px;font-size:17px;line-height:17px;color:#0f2a3a;font-family:'Liberation Sans', sans-serif;left:683.00px;width:106px;text-align:center;">Link hay</div>
<div class="a" style="left:103px;top:941px;width:1px;height:23px;background:#d0d0d0"></div>
<div class="a" style="left:189px;top:941px;width:1px;height:23px;background:#d0d0d0"></div>
<div class="a" style="left:280px;top:941px;width:1px;height:23px;background:#d0d0d0"></div>
<div class="a" style="left:377px;top:941px;width:1px;height:23px;background:#d0d0d0"></div>
<div class="a" style="left:476px;top:941px;width:1px;height:23px;background:#d0d0d0"></div>
<div class="a" style="left:580px;top:941px;width:1px;height:23px;background:#d0d0d0"></div>
<div class="a" style="left:690px;top:941px;width:1px;height:23px;background:#d0d0d0"></div>
<div class="a" style="left:781px;top:941px;width:1px;height:23px;background:#d0d0d0"></div>
<div class="a" style="left:192px;top:962px;width:86px;height:2px;background:#2c6b4a"></div>
<div class="a" style="left:185px;top:934px;width:98px;height:33px;border:3px solid #d0121b;border-radius:5px;box-sizing:border-box"></div>
<svg class="a" style="left:813px;top:942px;" width="22" height="22" viewBox="0 0 22 22"><circle cx="11" cy="11" r="9.5" fill="none" stroke="#8a8a8a" stroke-width="1.4"/><path d="M11 5.5v11M5.5 11h11" stroke="#8a8a8a" stroke-width="1.6"/></svg>
<div class="a" style="left:1204px;top:939px;width:405px;height:28px;background:#f7f7f7"></div>
<div class="a" style="left:1218px;top:947px;width:3px;height:3px;background:#a0a0a0"></div>
<div class="a" style="left:1218px;top:952px;width:3px;height:3px;background:#a0a0a0"></div>
<div class="a" style="left:1218px;top:957px;width:3px;height:3px;background:#a0a0a0"></div>
<div class="a" style="left:1236px;top:943px;width:373px;height:19px;border:1px solid #c6c6c6;box-sizing:border-box;background:#fff"></div>
<div class="a" style="left:1255px;top:943px;width:1px;height:19px;background:#c6c6c6"></div>
<svg class="a" style="left:1242px;top:948px;" width="6" height="10" viewBox="0 0 6 10"><path d="M6 0v10L0 5z" fill="#666"/></svg>
<div class="a t" style="top:181.68px;font-size:24px;line-height:24px;color:#ffe51a;font-family:'Liberation Sans', sans-serif;left:878.50px;font-weight:700;-webkit-text-stroke:4.6px #e3140f;paint-order:stroke fill;letter-spacing:0.76px;">- Gõ từ khóa tìm kiếm</div>
<div class="a t" style="top:217.18px;font-size:24px;line-height:24px;color:#ffe51a;font-family:'Liberation Sans', sans-serif;left:880.50px;font-weight:700;-webkit-text-stroke:4.6px #e3140f;paint-order:stroke fill;letter-spacing:0.84px;">- Hoặc dùng lệnh Ctrl + F của Excel</div>
<div class="a t" style="top:263.18px;font-size:24px;line-height:24px;color:#ffe51a;font-family:'Liberation Sans', sans-serif;left:881.50px;font-weight:700;-webkit-text-stroke:4.6px #e3140f;paint-order:stroke fill;letter-spacing:0.6px;">- Hoặc để cố định ở 1 vị trí trong bảng tính, tìm là thấy</div>
<div class="a t" style="top:644.11px;font-size:23.5px;line-height:23.5px;color:#ffe51a;font-family:'Liberation Sans', sans-serif;left:1420.00px;font-weight:700;-webkit-text-stroke:4.6px #e3140f;paint-order:stroke fill;">Kích để</div>
<div class="a t" style="top:676.11px;font-size:23.5px;line-height:23.5px;color:#ffe51a;font-family:'Liberation Sans', sans-serif;left:1422.50px;font-weight:700;-webkit-text-stroke:4.6px #e3140f;paint-order:stroke fill;">mở file</div>
<svg class="a" style="left:0px;top:0px;pointer-events:none" width="1609" height="972" viewBox="0 0 1609 972"><path d="M1014 180L937 142" stroke="#e3140f" stroke-width="3.2" stroke-linecap="round"/><path d="M930 138L948 141L942 151z" fill="#e3140f"/></svg>
<svg class="a" style="left:0px;top:0px;pointer-events:none" width="1609" height="972" viewBox="0 0 1609 972"><path d="M1419.6 625.6L1369 595" stroke="#e3140f" stroke-width="3.2" stroke-linecap="round"/><path d="M1363 592L1380 596L1375 605z" fill="#e3140f"/></svg></body></html>
